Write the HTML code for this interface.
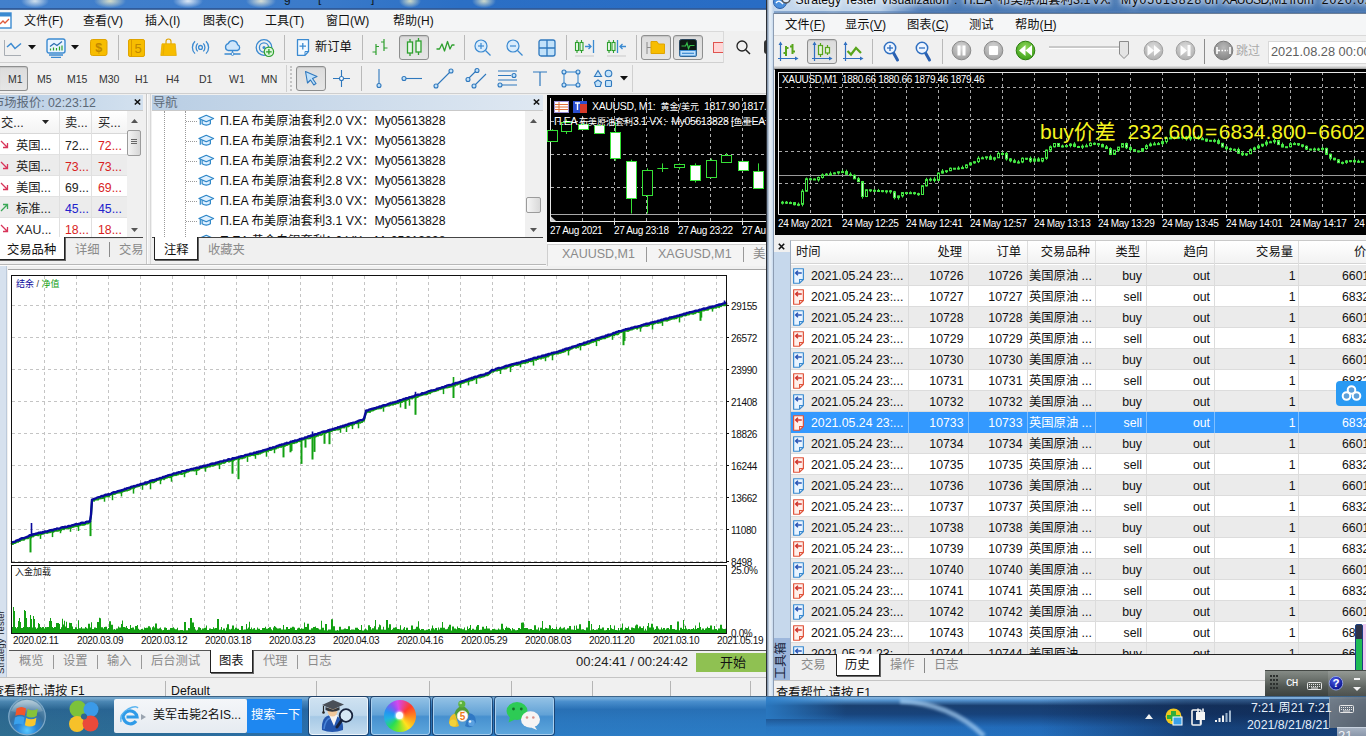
<!DOCTYPE html>
<html lang="zh-CN"><head><meta charset="utf-8"><title>MetaTrader 5</title>
<style>
html,body{margin:0;padding:0;}
body{width:1366px;height:736px;overflow:hidden;background:#f0f0f0;font-family:"Liberation Sans","Noto Sans CJK SC",sans-serif;font-size:12px;color:#1a1a1a;}
#root{position:relative;width:1366px;height:736px;overflow:hidden;background:#f0f0f0;}
.a{position:absolute;}
.t{position:absolute;white-space:nowrap;line-height:1;}
svg{position:absolute;overflow:visible;}
.sep{position:absolute;width:1px;background:#b9b9b9;}
.btnon{position:absolute;border:1px solid #8e8f8f;border-radius:3px;background:linear-gradient(#dcdcdc,#e6e6e6);box-shadow:inset 0 1px 1px #c5c5c5;box-sizing:border-box;}
.tf{position:absolute;white-space:nowrap;line-height:1;font-size:12px;color:#3a3a3a;}
.gtab{color:#8a8a8a;}
.row{position:absolute;left:790px;width:576px;height:21px;border-bottom:1px solid #dcdcdc;box-sizing:border-box;}
.row.g{background:#ebebeb;}
.row.sel{background:#3399ff;color:#fff;border-bottom-color:#3399ff;}
.row .t{top:5px;font-size:12.3px;}
.cd{position:absolute;top:0;width:1px;height:21px;background:#dcdcdc;}

</style></head>
<body>
<div id="root">
<div class="a" style="left:0;top:0;width:766px;height:9px;background:radial-gradient(ellipse 14px 7px at 35px 1px,rgba(225,235,240,.9),rgba(225,235,240,0)),radial-gradient(ellipse 16px 7px at 110px 1px,rgba(232,232,200,.9),rgba(232,232,200,0)),radial-gradient(ellipse 15px 7px at 188px 1px,rgba(240,245,250,.9),rgba(240,245,250,0)),radial-gradient(ellipse 15px 7px at 261px 1px,rgba(235,235,215,.9),rgba(235,235,215,0)),radial-gradient(ellipse 11px 7px at 410px 1px,rgba(225,230,200,.9),rgba(225,230,200,0)),radial-gradient(ellipse 12px 7px at 484px 1px,rgba(225,230,205,.9),rgba(225,230,205,0)),linear-gradient(90deg,#4280cc 0,#3b7bca 40%,#2b6fc5 60%,#286cc4 100%);"></div>
<div class="a" style="left:0;top:8px;width:766px;height:2px;background:linear-gradient(#1f4f98,#5f7fa8);"></div>
<div class="t" style="left:284px;top:-8px;font-size:12px;color:#101820;">g</div><div class="t" style="left:318px;top:-8px;font-size:12px;color:#101820;">[</div><div class="t" style="left:371px;top:-8px;font-size:12px;color:#101820;">]</div>
<div class="a" style="left:0;top:10px;width:766px;height:21px;background:#f4f5f6;"></div>
<div class="a" style="left:0;top:31px;width:723px;height:1px;background:#d9d9d9;"></div>
<div class="a" style="left:0;top:62px;width:723px;height:1px;background:#d0d0d0;"></div>
<div class="a" style="left:723px;top:31px;width:1px;height:32px;background:#d9d9d9;"></div>
<div class="a" style="left:0;top:93px;width:766px;height:1px;background:#cfcfcf;"></div>
<svg style="left:0;top:12px" width="13" height="18" viewBox="0 0 13 18"><rect x="-3" y="1" width="14" height="15" fill="#fff" stroke="#3b8ad1" stroke-width="1.4"/><rect x="-3" y="1" width="14" height="3.5" fill="#3b8ad1"/><path d="M0 12 L3 9 L5 11 L9 7" stroke="#e05a3a" stroke-width="1.3" fill="none"/></svg>
<div class="t" style="left:24px;top:15px;font-size:12px;color:#111;">文件(F)</div>
<div class="t" style="left:83px;top:15px;font-size:12px;color:#111;">查看(V)</div>
<div class="t" style="left:145px;top:15px;font-size:12px;color:#111;">插入(I)</div>
<div class="t" style="left:203px;top:15px;font-size:12px;color:#111;">图表(C)</div>
<div class="t" style="left:265px;top:15px;font-size:12px;color:#111;">工具(T)</div>
<div class="t" style="left:326px;top:15px;font-size:12px;color:#111;">窗口(W)</div>
<div class="t" style="left:393px;top:15px;font-size:12px;color:#111;">帮助(H)</div>
<svg style="left:1px;top:39px" width="21" height="18" viewBox="0 0 21 18"><path d="M3.5 1 V16.5 H20" stroke="#a8adb3" stroke-width="1" fill="none"/><path d="M6 8 L10 4.5 L14 9.500 L20 4.500" stroke="#3b8ad1" stroke-width="1.5" fill="none"/></svg>
<svg style="left:28px;top:45px" width="8" height="5" viewBox="0 0 8 5"><path d="M0 0 H8 L4 4.5 Z" fill="#111"/></svg>
<svg style="left:46px;top:38px" width="20" height="20" viewBox="0 0 20 20"><rect x="1" y="1" width="18" height="14" rx="2" fill="#eaf4ff" stroke="#3b8ad1" stroke-width="1.4"/><path d="M3 17 H17 M5 19.3 H15" stroke="#3b8ad1" stroke-width="1.3"/><path d="M4 8.5 L8 5.5 L11 7.5 L16 3.5" stroke="#2c6fb0" stroke-width="1.2" fill="none"/><path d="M4.5 12.5 V10.5 M7.5 12.5 V9.5 M10.5 12.5 V10 M13.5 12.5 V8.5 M16 12.5 V7.5" stroke="#2ea02e" stroke-width="1.2"/></svg>
<svg style="left:71px;top:45px" width="8" height="5" viewBox="0 0 8 5"><path d="M0 0 H8 L4 4.5 Z" fill="#111"/></svg>
<svg style="left:90px;top:38.5px" width="18" height="17" viewBox="0 0 18 17"><rect x="0.5" y="0.5" width="16.5" height="16" rx="2" fill="#f7bd00" stroke="#e0a400" stroke-width="1"/><text x="8.7" y="13" font-size="12.5" font-family="Liberation Sans,sans-serif" font-weight="bold" text-anchor="middle" fill="#c08800">$</text></svg>
<div class="sep" style="left:118px;top:35px;height:25px;"></div>
<svg style="left:128px;top:38.5px" width="18" height="18" viewBox="0 0 18 18"><rect x="0.5" y="0.5" width="16" height="17" rx="1.5" fill="#f7bd00" stroke="#e0a400" stroke-width="1"/><path d="M3.5 0.5 V17.5" stroke="#d99a00" stroke-width="1"/><text x="10" y="13.5" font-size="13" font-family="Liberation Sans,sans-serif" text-anchor="middle" fill="#c08800">5</text></svg>
<svg style="left:160px;top:38px" width="18" height="19" viewBox="0 0 18 19"><path d="M6 8 V3.500 Q6 1 8.500 1 Q11 1 11 3.500 V8" stroke="#e0a400" stroke-width="1.200" fill="none"/><path d="M2 5.800 H15.200 L16.300 17.500 H0.800 Z" fill="#f7bd00" stroke="#e6ac00" stroke-width="0.800"/><path d="M4 6.500 L3.200 17" stroke="#e8ae00" stroke-width="1.200"/></svg>
<svg style="left:191px;top:39px" width="19" height="17" viewBox="0 0 19 17"><circle cx="9.500" cy="8.400" r="1.900" fill="none" stroke="#3b8ad1" stroke-width="1.300"/><path d="M6.700 4.400 A5.800 5.800 0 0 0 6.700 12.400 M12.300 4.400 A5.800 5.800 0 0 1 12.300 12.400" stroke="#3b8ad1" stroke-width="1.300" fill="none"/><path d="M4 2.200 A8.700 8.700 0 0 0 4 14.600 M15 2.200 A8.700 8.700 0 0 1 15 14.600" stroke="#3b8ad1" stroke-width="1.300" fill="none"/></svg>
<svg style="left:223px;top:39px" width="19" height="19" viewBox="0 0 19 19"><path d="M5 11.500 A3.600 3.600 0 0 1 5.200 4.600 A5 5 0 0 1 14.600 5.600 A3.100 3.100 0 0 1 14.400 11.500 Z" fill="#cfe6fb" stroke="#3b8ad1" stroke-width="1.300"/><path d="M9.500 11.500 V14 M1.500 15 H17.500" stroke="#3b8ad1" stroke-width="1.300"/><circle cx="9.500" cy="15" r="1.400" fill="#fff" stroke="#3b8ad1" stroke-width="1"/></svg>
<svg style="left:255px;top:38px" width="20" height="20" viewBox="0 0 20 20"><circle cx="9" cy="9.500" r="7.800" fill="none" stroke="#3b8ad1" stroke-width="1.300"/><circle cx="9" cy="9.500" r="4.600" fill="none" stroke="#3b8ad1" stroke-width="1.300"/><circle cx="9" cy="9.500" r="1.500" fill="#3b8ad1"/><circle cx="13.900" cy="13.800" r="4.700" fill="#dcf6dc" stroke="#2ea02e" stroke-width="1.200"/><path d="M13.900 11 V16.600 M11.100 13.800 H16.700" stroke="#2ea02e" stroke-width="1.300"/></svg>
<div class="sep" style="left:284px;top:35px;height:25px;"></div>
<svg style="left:296px;top:39px" width="14" height="17" viewBox="0 0 14 17"><path d="M1.500 0.700 H12.500 V12.500 L9 16.300 H1.500 Z" fill="#f4faff" stroke="#3b8ad1" stroke-width="1.300" stroke-linejoin="round"/><path d="M9 16 V12.500 H12.500" fill="none" stroke="#3b8ad1" stroke-width="1"/><path d="M6.800 4 V10.500 M3.500 7.200 H10" stroke="#3b8ad1" stroke-width="1.300"/></svg>
<div class="t" style="left:315px;top:41px;font-size:12.3px;color:#111;">新订单</div>
<div class="sep" style="left:362px;top:35px;height:25px;"></div>
<svg style="left:371px;top:38px" width="18" height="18" viewBox="0 0 18 18"><path d="M5 6 V17 M1.5 14 H5 M5 8.5 H8" stroke="#2ea02e" stroke-width="1.200" fill="none"/><path d="M13 1 V13 M10 4 H13 M13 10 H16.5" stroke="#2ea02e" stroke-width="1.200" fill="none"/></svg>
<div class="btnon" style="left:399px;top:35px;width:30px;height:25px;"></div>
<svg style="left:406px;top:38px" width="17" height="19" viewBox="0 0 17 19"><path d="M4 1 V18 M12.5 0 V17" stroke="#2ea02e" stroke-width="1.3"/><rect x="1.5" y="4" width="5" height="11" fill="#e9f8e9" stroke="#2ea02e" stroke-width="1.3"/><rect x="10" y="3" width="5" height="11" fill="#e9f8e9" stroke="#2ea02e" stroke-width="1.3"/></svg>
<svg style="left:436px;top:40px" width="19" height="14" viewBox="0 0 19 14"><path d="M0.5 9 L3.5 9 L6 4 L8.5 11 L11.5 1.5 L14 9 L16 5 L18.5 5" stroke="#2ea02e" stroke-width="1.300" fill="none" stroke-linejoin="round"/></svg>
<div class="sep" style="left:464px;top:35px;height:25px;"></div>
<svg style="left:474px;top:39px" width="17" height="17" viewBox="0 0 17 17"><circle cx="7" cy="7" r="6" fill="#d9ecfc" stroke="#3b8ad1" stroke-width="1.200"/><path d="M11.5 11.5 L16.5 16.5" stroke="#3b8ad1" stroke-width="1.300"/><path d="M4 7 H10" stroke="#3b8ad1" stroke-width="1.200"/><path d="M7 4 V10" stroke="#3b8ad1" stroke-width="1.200"/></svg>
<svg style="left:506px;top:39px" width="17" height="17" viewBox="0 0 17 17"><circle cx="7" cy="7" r="6" fill="#d9ecfc" stroke="#3b8ad1" stroke-width="1.200"/><path d="M11.5 11.5 L16.5 16.5" stroke="#3b8ad1" stroke-width="1.300"/><path d="M4 7 H10" stroke="#3b8ad1" stroke-width="1.200"/></svg>
<svg style="left:538px;top:38.5px" width="18" height="18" viewBox="0 0 18 18"><rect x="1" y="1" width="16" height="16" rx="2" fill="#c2e2fa" stroke="#2f78bd" stroke-width="1.300"/><path d="M9 1 V17 M1 9 H17" stroke="#2f78bd" stroke-width="1.300"/></svg>
<div class="sep" style="left:566px;top:35px;height:25px;"></div>
<svg style="left:574px;top:38px" width="21" height="19" viewBox="0 0 21 19"><path d="M3 2 V15 M7.5 2 V15" stroke="#2ea02e" stroke-width="1.1"/><rect x="1.5" y="4.5" width="3" height="8" fill="#e9f8e9" stroke="#2ea02e" stroke-width="1.1"/><rect x="6" y="4.500" width="3" height="8" fill="#e9f8e9" stroke="#2ea02e" stroke-width="1.1"/><path d="M11 8.5 H17 M14.5 6 L17 8.500 L14.500 11" stroke="#3b8ad1" stroke-width="1.3" fill="none"/><path d="M19.500 2 V15" stroke="#3b8ad1" stroke-width="1.3"/><path d="M1 18 H20" stroke="#c9c9c9" stroke-width="1"/></svg>
<svg style="left:606px;top:38px" width="21" height="19" viewBox="0 0 21 19"><path d="M3 2 V15 M7.5 2 V15" stroke="#2ea02e" stroke-width="1.1"/><rect x="1.5" y="4.5" width="3" height="8" fill="#e9f8e9" stroke="#2ea02e" stroke-width="1.1"/><rect x="6" y="4.5" width="3" height="8" fill="#e9f8e9" stroke="#2ea02e" stroke-width="1.1"/><path d="M11.5 2 V15" stroke="#3b8ad1" stroke-width="1.3"/><path d="M14 8.5 H20 M16.5 6 L14 8.5 L16.5 11" stroke="#3b8ad1" stroke-width="1.3" fill="none"/><path d="M1 18 H20" stroke="#c9c9c9" stroke-width="1"/></svg>
<div class="sep" style="left:636px;top:35px;height:25px;"></div>
<div class="btnon" style="left:641px;top:35px;width:30px;height:25px;"></div>
<svg style="left:646px;top:40px" width="20" height="15" viewBox="0 0 20 15"><path d="M1 2 V14" stroke="#8a8a8a" stroke-width="1"/><path d="M1 7.5 H5" stroke="#8a8a8a" stroke-width="1"/><path d="M5 1.5 H11 L12.5 4 H18.5 V13.5 H5 Z" fill="#f7bd00" stroke="#e0a400" stroke-width="1"/></svg>
<div class="btnon" style="left:673px;top:35px;width:30px;height:25px;"></div>
<svg style="left:679px;top:39px" width="18" height="18" viewBox="0 0 18 18"><rect x="0.5" y="0.5" width="17" height="17" rx="2" fill="#0d1a14" stroke="#25425a" stroke-width="1"/><rect x="1" y="11.5" width="16" height="5.5" fill="#bfe0fb" stroke="#3b8ad1" stroke-width="1"/><path d="M3 14.3 H15" stroke="#3b8ad1" stroke-width="1.2"/><path d="M2.500 7 H6.500 L8 4 L9.500 9.500 L11 6.500 H15.500" stroke="#36c04a" stroke-width="1.2" fill="none"/></svg>
<div class="a" style="left:713px;top:42px;width:10px;height:11px;background:#ffd6d6;border:1.5px solid #e0534f;border-right:none;box-sizing:border-box;"></div>
<svg style="left:736px;top:40px" width="15" height="15" viewBox="0 0 15 15"><circle cx="6" cy="6" r="5" fill="none" stroke="#222" stroke-width="1.3"/><path d="M9.700 9.700 L14 14" stroke="#222" stroke-width="1.500"/></svg>
<div class="a" style="left:764px;top:40px;width:3px;height:14px;background:#333;border-radius:3px 0 0 3px;"></div>
<div class="btnon" style="left:0px;top:66px;width:28px;height:25px;border-left:none;border-radius:0 3px 3px 0;"></div>
<div class="t" style="left:8px;top:73.5px;font-size:10.5px;color:#333;">M1</div>
<div class="t" style="left:37px;top:73.5px;font-size:10.5px;color:#333;">M5</div>
<div class="t" style="left:67px;top:73.5px;font-size:10.5px;color:#333;">M15</div>
<div class="t" style="left:99px;top:73.5px;font-size:10.5px;color:#333;">M30</div>
<div class="t" style="left:135px;top:73.5px;font-size:10.5px;color:#333;">H1</div>
<div class="t" style="left:166px;top:73.5px;font-size:10.5px;color:#333;">H4</div>
<div class="t" style="left:199px;top:73.5px;font-size:10.5px;color:#333;">D1</div>
<div class="t" style="left:229px;top:73.5px;font-size:10.5px;color:#333;">W1</div>
<div class="t" style="left:261px;top:73.5px;font-size:10.5px;color:#333;">MN</div>
<div class="sep" style="left:286px;top:65px;height:27px;background:#cfcfcf;"></div>
<div class="a" style="left:290px;top:66px;width:1px;height:25px;border-left:2px dotted #c4c4c4;"></div>
<div class="btnon" style="left:296px;top:66px;width:30px;height:25px;"></div>
<svg style="left:304px;top:70px" width="15" height="17" viewBox="0 0 15 17"><path d="M1.500 1.500 L13 6.500 L8.500 8.500 L12 13.500 L9.800 15 L6.500 10 L3.500 13 Z" fill="#bfe0fa" stroke="#2f78bd" stroke-width="1.100" stroke-linejoin="round"/></svg>
<svg style="left:333px;top:70px" width="17" height="17" viewBox="0 0 17 17"><path d="M8.500 0 V17 M0 8.500 H17" stroke="#2f78bd" stroke-width="1.100"/><circle cx="8.500" cy="8.500" r="2" fill="#fff" stroke="#2f78bd" stroke-width="1.100"/></svg>
<div class="sep" style="left:361px;top:66px;height:25px;"></div>
<svg style="left:375px;top:69px" width="8" height="20" viewBox="0 0 8 20"><path d="M4 0 V15" stroke="#2f78bd" stroke-width="1.100"/><circle cx="4" cy="16.500" r="2" fill="#c2e2fa" stroke="#2f78bd" stroke-width="1.100"/></svg>
<svg style="left:401px;top:75px" width="21" height="7" viewBox="0 0 21 7"><path d="M5 3.500 H21" stroke="#2f78bd" stroke-width="1.100"/><circle cx="3" cy="3.500" r="2" fill="#c2e2fa" stroke="#2f78bd" stroke-width="1.100"/></svg>
<svg style="left:433px;top:68px" width="21" height="21" viewBox="0 0 21 21"><path d="M4 17 L17 4" stroke="#2f78bd" stroke-width="1.100"/><circle cx="3" cy="18" r="2" fill="#c2e2fa" stroke="#2f78bd" stroke-width="1.100"/><circle cx="18" cy="3" r="2" fill="#c2e2fa" stroke="#2f78bd" stroke-width="1.100"/></svg>
<svg style="left:465px;top:68px" width="22" height="21" viewBox="0 0 22 21"><path d="M4 10 L11 3 M10 17 L21 6" stroke="#2f78bd" stroke-width="1.100"/><circle cx="3" cy="11.500" r="2" fill="#c2e2fa" stroke="#2f78bd" stroke-width="1.100"/><circle cx="12" cy="2.500" r="2" fill="#c2e2fa" stroke="#2f78bd" stroke-width="1.100"/><circle cx="9" cy="18" r="2" fill="#c2e2fa" stroke="#2f78bd" stroke-width="1.100"/></svg>
<svg style="left:497px;top:69px" width="22" height="19" viewBox="0 0 22 19"><path d="M1 2 H20 M1 6.500 H14 M1 11 H20 M5 16 H20" stroke="#2f78bd" stroke-width="1.100"/><circle cx="17" cy="6.500" r="2" fill="#c2e2fa" stroke="#2f78bd" stroke-width="1.100"/><circle cx="3" cy="16" r="2" fill="#c2e2fa" stroke="#2f78bd" stroke-width="1.100"/></svg>
<svg style="left:533px;top:71px" width="14" height="15" viewBox="0 0 14 15"><path d="M0 1 H14 M7 1 V15" stroke="#2f78bd" stroke-width="1.200"/></svg>
<svg style="left:561px;top:69px" width="20" height="19" viewBox="0 0 20 19"><rect x="3" y="3" width="14" height="13" fill="none" stroke="#3b8ad1" stroke-width="1.100"/><circle cx="3" cy="3" r="2" fill="#c2e2fa" stroke="#2f78bd" stroke-width="1.100"/><circle cx="17" cy="3" r="2" fill="#c2e2fa" stroke="#2f78bd" stroke-width="1.100"/><circle cx="3" cy="16" r="2" fill="#c2e2fa" stroke="#2f78bd" stroke-width="1.100"/><circle cx="17" cy="16" r="2" fill="#c2e2fa" stroke="#2f78bd" stroke-width="1.100"/></svg>
<svg style="left:594px;top:69px" width="19" height="19" viewBox="0 0 19 19"><path d="M4 1.500 L7.500 7.500 H0.500 Z" fill="#c2e2fa" stroke="#2f78bd" stroke-width="1.100"/><circle cx="14.500" cy="4.500" r="3.300" fill="#c2e2fa" stroke="#2f78bd" stroke-width="1.100"/><path d="M4 11 L7.500 13.500 L6.200 17.500 H1.800 L0.500 13.500 Z" fill="#c2e2fa" stroke="#2f78bd" stroke-width="1.100"/><rect x="11.500" y="11.500" width="6" height="6" rx="1" fill="#c2e2fa" stroke="#2f78bd" stroke-width="1.100"/></svg>
<svg style="left:620px;top:76px" width="8" height="5" viewBox="0 0 8 5"><path d="M0 0 H8 L4 4.5 Z" fill="#111"/></svg>
<div class="sep" style="left:632px;top:65px;height:27px;background:#d0d0d0;"></div>
<div class="a" style="left:0;top:95px;width:143px;height:15px;background:linear-gradient(90deg,#b9cee4,#d3e1ef);"></div>
<div class="a" style="left:0;top:110px;width:143px;height:1px;background:#c9c9c9;"></div>
<div class="t" style="left:-8px;top:97px;font-size:12.3px;color:#5b6877;">市场报价: 02:23:12</div>
<svg style="left:134px;top:99px" width="7" height="6" viewBox="0 0 7 6"><path d="M0.800 0.500 L6.200 5.500 M6.200 0.500 L0.800 5.500" stroke="#111" stroke-width="1.600"/></svg>
<div class="a" style="left:0;top:111px;width:143px;height:127px;background:#fff;"></div>
<div class="a" style="left:0;top:111px;width:127px;height:22px;background:linear-gradient(#ffffff,#f3f3f3);border-bottom:1px solid #d8d8d8;"></div>
<div class="a" style="left:0;top:154px;width:127px;height:1px;background:#e2e2e2;"></div>
<svg style="left:0;top:140px" width="9" height="9" viewBox="0 0 9 9"><path d="M1 1 L7.500 7.500 M3 7.500 H7.500 V3" stroke="#d8355a" stroke-width="1.300" fill="none"/></svg>
<div class="t" style="left:16px;top:140px;font-size:12.3px;color:#222;">英国...</div>
<div class="t" style="left:65px;top:140px;font-size:12.3px;color:#222;">72...</div>
<div class="t" style="left:98px;top:140px;font-size:12.3px;color:#d81e1e;">72...</div>
<div class="a" style="left:0;top:155px;width:127px;height:21px;background:#ececec;"></div>
<div class="a" style="left:0;top:175px;width:127px;height:1px;background:#e2e2e2;"></div>
<svg style="left:0;top:161px" width="9" height="9" viewBox="0 0 9 9"><path d="M1 1 L7.500 7.500 M3 7.500 H7.500 V3" stroke="#d8355a" stroke-width="1.300" fill="none"/></svg>
<div class="t" style="left:16px;top:161px;font-size:12.3px;color:#222;">英国...</div>
<div class="t" style="left:65px;top:161px;font-size:12.3px;color:#d81e1e;">73...</div>
<div class="t" style="left:98px;top:161px;font-size:12.3px;color:#d81e1e;">73...</div>
<div class="a" style="left:0;top:196px;width:127px;height:1px;background:#e2e2e2;"></div>
<svg style="left:0;top:182px" width="9" height="9" viewBox="0 0 9 9"><path d="M1 1 L7.500 7.500 M3 7.500 H7.500 V3" stroke="#d8355a" stroke-width="1.300" fill="none"/></svg>
<div class="t" style="left:16px;top:182px;font-size:12.3px;color:#222;">美国...</div>
<div class="t" style="left:65px;top:182px;font-size:12.3px;color:#222;">69...</div>
<div class="t" style="left:98px;top:182px;font-size:12.3px;color:#d81e1e;">69...</div>
<div class="a" style="left:0;top:197px;width:127px;height:21px;background:#ececec;"></div>
<div class="a" style="left:0;top:217px;width:127px;height:1px;background:#e2e2e2;"></div>
<svg style="left:0;top:203px" width="9" height="9" viewBox="0 0 9 9"><path d="M1 8 L7.500 1.500 M3 1.500 H7.500 V6" stroke="#3aa856" stroke-width="1.300" fill="none"/></svg>
<div class="t" style="left:16px;top:203px;font-size:12.3px;color:#222;">标准...</div>
<div class="t" style="left:65px;top:203px;font-size:12.3px;color:#2222cc;">45...</div>
<div class="t" style="left:98px;top:203px;font-size:12.3px;color:#2222cc;">45...</div>
<div class="a" style="left:0;top:238px;width:127px;height:1px;background:#e2e2e2;"></div>
<svg style="left:0;top:224px" width="9" height="9" viewBox="0 0 9 9"><path d="M1 1 L7.500 7.500 M3 7.500 H7.500 V3" stroke="#d8355a" stroke-width="1.300" fill="none"/></svg>
<div class="t" style="left:16px;top:224px;font-size:12.3px;color:#222;">XAU...</div>
<div class="t" style="left:65px;top:224px;font-size:12.3px;color:#d81e1e;">18...</div>
<div class="t" style="left:98px;top:224px;font-size:12.3px;color:#d81e1e;">18...</div>
<div class="t" style="left:1px;top:117px;font-size:12.3px;color:#222;">交...</div>
<svg style="left:42px;top:120px" width="7" height="4" viewBox="0 0 7 4"><path d="M0 0 H7 L3.500 4 Z" fill="#222"/></svg>
<div class="t" style="left:65px;top:117px;font-size:12.3px;color:#222;">卖...</div>
<div class="t" style="left:98px;top:117px;font-size:12.3px;color:#222;">买...</div>
<div class="a" style="left:59px;top:111px;width:1px;height:127px;background:#e0e0e0;"></div>
<div class="a" style="left:91px;top:111px;width:1px;height:127px;background:#e0e0e0;"></div>
<div class="a" style="left:127px;top:111px;width:16px;height:127px;background:#f0f0f0;"></div>
<svg style="left:131px;top:119px" width="7" height="4" viewBox="0 0 7 4"><path d="M0 4 L3.500 0 L7 4 Z" fill="#555"/></svg>
<svg style="left:131px;top:228px" width="7" height="4" viewBox="0 0 7 4"><path d="M0 0 L3.500 4 L7 0 Z" fill="#555"/></svg>
<div class="a" style="left:127px;top:130px;width:14px;height:26px;border:1px solid #9b9b9b;border-radius:2px;background:linear-gradient(90deg,#f4f4f4,#d6d6d6);box-sizing:border-box;"></div>
<div class="a" style="left:131px;top:139px;width:6px;height:1px;background:#666;box-shadow:0 2px 0 #666,0 4px 0 #666;"></div>
<div class="a" style="left:0;top:237px;width:143px;height:1px;background:#444;"></div>
<div class="a" style="left:-2px;top:237px;width:67px;height:23px;background:#fff;border:1px solid #222;border-top:none;box-sizing:border-box;box-shadow:1px 1px 0 #666;"></div>
<div class="t" style="left:7px;top:244px;font-size:12.3px;color:#111;">交易品种</div>
<div class="t gtab" style="left:75px;top:244px;font-size:12.3px;">详细</div>
<div class="a" style="left:109px;top:242px;width:1px;height:15px;background:#8a8a8a;"></div>
<div class="t gtab" style="left:119px;top:244px;font-size:12.3px;">交易</div>
<div class="a" style="left:143px;top:94px;width:9px;height:172px;background:#f0f0f0;"></div>
<div class="a" style="left:146px;top:94px;width:1px;height:170px;background:#c8c8c8;"></div>
<div class="a" style="left:147px;top:94px;width:1px;height:170px;background:#fbfbfb;"></div>
<div class="a" style="left:150px;top:94px;width:1px;height:170px;background:#d8d8d8;"></div>
<div class="a" style="left:0;top:264px;width:546px;height:1px;background:#b8b8b8;"></div>
<div class="a" style="left:0;top:265px;width:546px;height:1px;background:#fcfcfc;"></div>
<div class="a" style="left:152px;top:95px;width:391px;height:15px;background:linear-gradient(90deg,#b9cee4,#dfe8f2);"></div>
<div class="a" style="left:152px;top:110px;width:391px;height:1px;background:#c9c9c9;"></div>
<div class="t" style="left:153px;top:97px;font-size:12.3px;color:#5b6877;">导航</div>
<svg style="left:533px;top:99px" width="7" height="6" viewBox="0 0 7 6"><path d="M0.800 0.500 L6.200 5.500 M6.200 0.500 L0.800 5.500" stroke="#111" stroke-width="1.600"/></svg>
<div class="a" style="left:152px;top:111px;width:391px;height:126px;background:#fff;overflow:hidden;" id="nav">
<div class="a" style="left:12px;top:0;width:0;height:126px;border-left:1px dotted #9a9a9a;"></div>
<div class="a" style="left:33px;top:0;width:0;height:126px;border-left:1px dotted #9a9a9a;"></div>
<div class="a" style="left:34px;top:10px;width:11px;height:0;border-top:1px dotted #9a9a9a;"></div>
<svg style="left:46px;top:3px" width="16.500" height="14" viewBox="0 0 18 15"><path d="M4.500 6.500 V10.500 Q9 13.500 13.500 10.500 V6.500" fill="#dff0ff" stroke="#2d86c8" stroke-width="1.300"/><path d="M1 4.800 L9 1.200 L17 4.800 L9 8.300 Z" fill="#dff0ff" stroke="#2d86c8" stroke-width="1.300" stroke-linejoin="round"/><path d="M2.500 5.800 V11.500" stroke="#2d86c8" stroke-width="1.300"/></svg>
<div class="t" style="left:68px;top:4px;font-size:12.3px;color:#111;">П.EA 布美原油套利2.0 VX：My05613828</div>
<div class="a" style="left:34px;top:30px;width:11px;height:0;border-top:1px dotted #9a9a9a;"></div>
<svg style="left:46px;top:23px" width="16.500" height="14" viewBox="0 0 18 15"><path d="M4.500 6.500 V10.500 Q9 13.500 13.500 10.500 V6.500" fill="#dff0ff" stroke="#2d86c8" stroke-width="1.300"/><path d="M1 4.800 L9 1.200 L17 4.800 L9 8.300 Z" fill="#dff0ff" stroke="#2d86c8" stroke-width="1.300" stroke-linejoin="round"/><path d="M2.500 5.800 V11.500" stroke="#2d86c8" stroke-width="1.300"/></svg>
<div class="t" style="left:68px;top:24px;font-size:12.3px;color:#111;">П.EA 布美原油套利2.1 VX：My05613828</div>
<div class="a" style="left:34px;top:50px;width:11px;height:0;border-top:1px dotted #9a9a9a;"></div>
<svg style="left:46px;top:43px" width="16.500" height="14" viewBox="0 0 18 15"><path d="M4.500 6.500 V10.500 Q9 13.500 13.500 10.500 V6.500" fill="#dff0ff" stroke="#2d86c8" stroke-width="1.300"/><path d="M1 4.800 L9 1.200 L17 4.800 L9 8.300 Z" fill="#dff0ff" stroke="#2d86c8" stroke-width="1.300" stroke-linejoin="round"/><path d="M2.500 5.800 V11.500" stroke="#2d86c8" stroke-width="1.300"/></svg>
<div class="t" style="left:68px;top:44px;font-size:12.3px;color:#111;">П.EA 布美原油套利2.2 VX：My05613828</div>
<div class="a" style="left:34px;top:70px;width:11px;height:0;border-top:1px dotted #9a9a9a;"></div>
<svg style="left:46px;top:63px" width="16.500" height="14" viewBox="0 0 18 15"><path d="M4.500 6.500 V10.500 Q9 13.500 13.500 10.500 V6.500" fill="#dff0ff" stroke="#2d86c8" stroke-width="1.300"/><path d="M1 4.800 L9 1.200 L17 4.800 L9 8.300 Z" fill="#dff0ff" stroke="#2d86c8" stroke-width="1.300" stroke-linejoin="round"/><path d="M2.500 5.800 V11.500" stroke="#2d86c8" stroke-width="1.300"/></svg>
<div class="t" style="left:68px;top:64px;font-size:12.3px;color:#111;">П.EA 布美原油套利2.8 VX：My05613828</div>
<div class="a" style="left:34px;top:90px;width:11px;height:0;border-top:1px dotted #9a9a9a;"></div>
<svg style="left:46px;top:83px" width="16.500" height="14" viewBox="0 0 18 15"><path d="M4.500 6.500 V10.500 Q9 13.500 13.500 10.500 V6.500" fill="#dff0ff" stroke="#2d86c8" stroke-width="1.300"/><path d="M1 4.800 L9 1.200 L17 4.800 L9 8.300 Z" fill="#dff0ff" stroke="#2d86c8" stroke-width="1.300" stroke-linejoin="round"/><path d="M2.500 5.800 V11.500" stroke="#2d86c8" stroke-width="1.300"/></svg>
<div class="t" style="left:68px;top:84px;font-size:12.3px;color:#111;">П.EA 布美原油套利3.0 VX：My05613828</div>
<div class="a" style="left:34px;top:110px;width:11px;height:0;border-top:1px dotted #9a9a9a;"></div>
<svg style="left:46px;top:103px" width="16.500" height="14" viewBox="0 0 18 15"><path d="M4.500 6.500 V10.500 Q9 13.500 13.500 10.500 V6.500" fill="#dff0ff" stroke="#2d86c8" stroke-width="1.300"/><path d="M1 4.800 L9 1.200 L17 4.800 L9 8.300 Z" fill="#dff0ff" stroke="#2d86c8" stroke-width="1.300" stroke-linejoin="round"/><path d="M2.500 5.800 V11.500" stroke="#2d86c8" stroke-width="1.300"/></svg>
<div class="t" style="left:68px;top:104px;font-size:12.3px;color:#111;">П.EA 布美原油套利3.1 VX：My05613828</div>
<div class="a" style="left:34px;top:130px;width:11px;height:0;border-top:1px dotted #9a9a9a;"></div>
<svg style="left:46px;top:123px" width="16.500" height="14" viewBox="0 0 18 15"><path d="M4.500 6.500 V10.500 Q9 13.500 13.500 10.500 V6.500" fill="#dff0ff" stroke="#2d86c8" stroke-width="1.300"/><path d="M1 4.800 L9 1.200 L17 4.800 L9 8.300 Z" fill="#dff0ff" stroke="#2d86c8" stroke-width="1.300" stroke-linejoin="round"/><path d="M2.500 5.800 V11.500" stroke="#2d86c8" stroke-width="1.300"/></svg>
<div class="t" style="left:68px;top:124px;font-size:12.3px;color:#111;">П.EA 黄金白银套利1.0 VX：My05613828</div>
<div class="a" style="left:373px;top:0;width:18px;height:126px;background:#f0f0f0;"></div>
<svg style="left:378px;top:8px" width="7" height="4" viewBox="0 0 7 4"><path d="M0 4 L3.500 0 L7 4 Z" fill="#555"/></svg>
<svg style="left:378px;top:117px" width="7" height="4" viewBox="0 0 7 4"><path d="M0 0 L3.500 4 L7 0 Z" fill="#555"/></svg>
<div class="a" style="left:374px;top:86px;width:15px;height:16px;border:1px solid #9b9b9b;border-radius:2px;background:linear-gradient(90deg,#f6f6f6,#d9d9d9);box-sizing:border-box;"></div>
</div>
<div class="a" style="left:152px;top:237px;width:391px;height:1px;background:#444;"></div>
<div class="a" style="left:154px;top:237px;width:44px;height:23px;background:#fff;border:1px solid #222;border-top:none;box-sizing:border-box;box-shadow:1px 1px 0 #666;"></div>
<div class="t" style="left:164px;top:244px;font-size:12.3px;color:#111;">注释</div>
<div class="t gtab" style="left:208px;top:244px;font-size:12.3px;">收藏夹</div>
<div class="a" style="left:547px;top:95px;width:219px;height:147px;background:#000;overflow:hidden;" id="mini">
<svg style="left:0;top:0" width="219" height="147" viewBox="0 0 219 147"><path d="M3.500 3 V126.500 H219" stroke="#e8e8e8" stroke-width="1" fill="none"/><path d="M4 119.500 H219" stroke="#a8a8a8" stroke-width="1"/><path d="M35.5 3 V126" stroke="#b0b0b0" stroke-width="1" stroke-dasharray="3 3"/><path d="M67.5 3 V126" stroke="#b0b0b0" stroke-width="1" stroke-dasharray="3 3"/><path d="M99.5 3 V126" stroke="#b0b0b0" stroke-width="1" stroke-dasharray="3 3"/><path d="M131.5 3 V126" stroke="#b0b0b0" stroke-width="1" stroke-dasharray="3 3"/><path d="M163.5 3 V126" stroke="#b0b0b0" stroke-width="1" stroke-dasharray="3 3"/><path d="M195.5 3 V126" stroke="#b0b0b0" stroke-width="1" stroke-dasharray="3 3"/><path d="M4 26.5 H219" stroke="#b0b0b0" stroke-width="1" stroke-dasharray="3 3"/><path d="M4 59.5 H219" stroke="#b0b0b0" stroke-width="1" stroke-dasharray="3 3"/><path d="M4 92.5 H219" stroke="#b0b0b0" stroke-width="1" stroke-dasharray="3 3"/><path d="M67.5 126 V130" stroke="#e8e8e8" stroke-width="1"/><path d="M131.5 126 V130" stroke="#e8e8e8" stroke-width="1"/><path d="M195.5 126 V130" stroke="#e8e8e8" stroke-width="1"/><path d="M5.5 34.1 V46.9" stroke="#35e035" stroke-width="1"/><rect x="0.5" y="35.5" width="10" height="11.0" fill="#000" stroke="#35e035" stroke-width="1"/><path d="M19.5 24.4 V39.0" stroke="#35e035" stroke-width="1"/><rect x="14.5" y="27.5" width="10" height="9.0" fill="#000" stroke="#35e035" stroke-width="1"/><path d="M36.5 28.0 V34.6" stroke="#35e035" stroke-width="1"/><rect x="31.5" y="29.5" width="10" height="5.0" fill="#fff" stroke="#35e035" stroke-width="1"/><path d="M52.5 29.3 V39.0" stroke="#35e035" stroke-width="1"/><rect x="47.5" y="30.5" width="10" height="8.0" fill="#fff" stroke="#35e035" stroke-width="1"/><path d="M68.5 26.8 V65.9" stroke="#35e035" stroke-width="1"/><rect x="63.5" y="37.5" width="10" height="26.0" fill="#fff" stroke="#35e035" stroke-width="1"/><path d="M84.5 64.7 V118.5" stroke="#35e035" stroke-width="1"/><rect x="79.5" y="66.5" width="10" height="37.0" fill="#fff" stroke="#35e035" stroke-width="1"/><path d="M100.5 73.3 V118.5" stroke="#35e035" stroke-width="1"/><rect x="95.5" y="75.5" width="10" height="25.0" fill="#000" stroke="#35e035" stroke-width="1"/><path d="M132.5 68.4 V74.5" stroke="#35e035" stroke-width="1"/><rect x="127.5" y="69.5" width="10" height="3.0" fill="#000" stroke="#35e035" stroke-width="1"/><path d="M148.5 68.4 V87.5" stroke="#35e035" stroke-width="1"/><rect x="143.5" y="70.5" width="10" height="15.0" fill="#fff" stroke="#35e035" stroke-width="1"/><path d="M164.5 63.5 V83.1" stroke="#35e035" stroke-width="1"/><rect x="159.5" y="65.5" width="10" height="17.0" fill="#000" stroke="#35e035" stroke-width="1"/><path d="M179.5 58.1 V66.4" stroke="#35e035" stroke-width="1"/><rect x="174.5" y="60.5" width="10" height="7.0" fill="#000" stroke="#35e035" stroke-width="1"/><path d="M196.5 65.9 V75.7" stroke="#35e035" stroke-width="1"/><rect x="191.5" y="66.5" width="10" height="9.0" fill="#fff" stroke="#35e035" stroke-width="1"/><path d="M211.5 68.4 V93.8" stroke="#35e035" stroke-width="1"/><rect x="206.5" y="76.5" width="10" height="17.0" fill="#fff" stroke="#35e035" stroke-width="1"/><path d="M115.5 68.4 V77.0 M110.3 73.5 H121.3" stroke="#35e035" stroke-width="1"/><path d="M4 121.500 L9 126 H4 Z" fill="#ccc"/></svg>
<svg style="left:7px;top:6px" width="15" height="12" viewBox="0 0 15 12"><rect x="0.500" y="0.500" width="14" height="11" fill="#fff" stroke="#9a8fd8" stroke-width="1"/><path d="M1 3.500 H14 M1 6 H14 M1 8.500 H14 M5 1 V11" stroke="#e0703a" stroke-width="1"/></svg>
<svg style="left:26px;top:6px" width="14" height="12" viewBox="0 0 14 12"><rect x="0" y="0" width="14" height="12" fill="#2b4fd0"/><rect x="7" y="3" width="7" height="9" fill="#d83a2a"/><path d="M2 2 H7 M4.500 2 V9" stroke="#fff" stroke-width="1.400"/></svg>
<div class="t" style="left:45px;top:6px;font-size:10.5px;letter-spacing:-0.35px;color:#fff;">XAUUSD, M1:&nbsp; <span style="font-size:9px;letter-spacing:0">黄金/美元</span>&nbsp; 1817.90 1817.90</div>
<div class="t" style="left:7px;top:21px;font-size:10.5px;letter-spacing:-0.35px;color:#fff;">П.EA <span style="font-size:9px;letter-spacing:0">布美原油套利</span>3.1 VX<span style="font-size:9px">：</span>My05613828 [<span style="font-size:9px;letter-spacing:0">鱼重</span>EA<span style="font-size:9px;letter-spacing:0">论坛</span>]</div>
<div class="t" style="left:3px;top:131px;font-size:10px;letter-spacing:-0.35px;color:#fff;">27 Aug 2021</div>
<div class="t" style="left:67px;top:131px;font-size:10px;letter-spacing:-0.35px;color:#fff;">27 Aug 23:18</div>
<div class="t" style="left:131px;top:131px;font-size:10px;letter-spacing:-0.35px;color:#fff;">27 Aug 23:22</div>
<div class="t" style="left:195px;top:131px;font-size:10px;letter-spacing:-0.35px;color:#fff;">27 Aug 23:26</div>
</div>
<div class="a" style="left:547px;top:242px;width:219px;height:2px;background:#fff;"></div>
<div class="a" style="left:547px;top:244px;width:219px;height:22px;background:#f4f4f4;border-top:1px solid #cfcfcf;border-left:1px solid #cfcfcf;box-sizing:border-box;"></div>
<div class="t" style="left:562px;top:248px;font-size:12.5px;color:#8a8a8a;">XAUUSD,M1</div>
<div class="a" style="left:646px;top:247px;width:1px;height:15px;background:#999;"></div>
<div class="t" style="left:658px;top:248px;font-size:12.5px;color:#8a8a8a;">XAGUSD,M1</div>
<div class="a" style="left:743px;top:247px;width:1px;height:15px;background:#999;"></div>
<div class="t" style="left:753px;top:248px;font-size:12.5px;color:#8a8a8a;">美</div>
<div class="a" style="left:8px;top:270px;width:758px;height:380px;background:#fff;"></div>
<div class="a" style="left:0;top:266px;width:7px;height:412px;background:#d6e1ee;border-right:1px solid #bccadb;box-sizing:border-box;"></div>
<div class="a" style="left:8px;top:269px;width:758px;height:1px;background:#a6a6a6;"></div>
<div class="a" style="left:0;top:600px;width:6px;height:78px;overflow:hidden;"><div class="t" style="left:-4px;top:74px;font-size:9.500px;color:#20242c;transform-origin:0 0;transform:rotate(-90deg);">Strategy Tester</div></div>
<svg style="left:0;top:0" width="766" height="650" viewBox="0 0 766 650"><path d="M44.5 276 V633" stroke="#c4c4c4" stroke-width="1" stroke-dasharray="3 3"/><path d="M76.5 276 V633" stroke="#c4c4c4" stroke-width="1" stroke-dasharray="3 3"/><path d="M108.5 276 V633" stroke="#c4c4c4" stroke-width="1" stroke-dasharray="3 3"/><path d="M140.5 276 V633" stroke="#c4c4c4" stroke-width="1" stroke-dasharray="3 3"/><path d="M172.5 276 V633" stroke="#c4c4c4" stroke-width="1" stroke-dasharray="3 3"/><path d="M204.5 276 V633" stroke="#c4c4c4" stroke-width="1" stroke-dasharray="3 3"/><path d="M236.5 276 V633" stroke="#c4c4c4" stroke-width="1" stroke-dasharray="3 3"/><path d="M268.5 276 V633" stroke="#c4c4c4" stroke-width="1" stroke-dasharray="3 3"/><path d="M300.5 276 V633" stroke="#c4c4c4" stroke-width="1" stroke-dasharray="3 3"/><path d="M332.5 276 V633" stroke="#c4c4c4" stroke-width="1" stroke-dasharray="3 3"/><path d="M364.5 276 V633" stroke="#c4c4c4" stroke-width="1" stroke-dasharray="3 3"/><path d="M396.5 276 V633" stroke="#c4c4c4" stroke-width="1" stroke-dasharray="3 3"/><path d="M428.5 276 V633" stroke="#c4c4c4" stroke-width="1" stroke-dasharray="3 3"/><path d="M460.5 276 V633" stroke="#c4c4c4" stroke-width="1" stroke-dasharray="3 3"/><path d="M492.5 276 V633" stroke="#c4c4c4" stroke-width="1" stroke-dasharray="3 3"/><path d="M524.5 276 V633" stroke="#c4c4c4" stroke-width="1" stroke-dasharray="3 3"/><path d="M556.5 276 V633" stroke="#c4c4c4" stroke-width="1" stroke-dasharray="3 3"/><path d="M588.5 276 V633" stroke="#c4c4c4" stroke-width="1" stroke-dasharray="3 3"/><path d="M620.5 276 V633" stroke="#c4c4c4" stroke-width="1" stroke-dasharray="3 3"/><path d="M652.5 276 V633" stroke="#c4c4c4" stroke-width="1" stroke-dasharray="3 3"/><path d="M684.5 276 V633" stroke="#c4c4c4" stroke-width="1" stroke-dasharray="3 3"/><path d="M716.5 276 V633" stroke="#c4c4c4" stroke-width="1" stroke-dasharray="3 3"/><path d="M12 305.5 H727" stroke="#c4c4c4" stroke-width="1" stroke-dasharray="3 3"/><path d="M12 337.5 H727" stroke="#c4c4c4" stroke-width="1" stroke-dasharray="3 3"/><path d="M12 369.5 H727" stroke="#c4c4c4" stroke-width="1" stroke-dasharray="3 3"/><path d="M12 401.5 H727" stroke="#c4c4c4" stroke-width="1" stroke-dasharray="3 3"/><path d="M12 433.5 H727" stroke="#c4c4c4" stroke-width="1" stroke-dasharray="3 3"/><path d="M12 465.5 H727" stroke="#c4c4c4" stroke-width="1" stroke-dasharray="3 3"/><path d="M12 497.5 H727" stroke="#c4c4c4" stroke-width="1" stroke-dasharray="3 3"/><path d="M12 529.5 H727" stroke="#c4c4c4" stroke-width="1" stroke-dasharray="3 3"/><path d="M12 561.5 H727" stroke="#c4c4c4" stroke-width="1" stroke-dasharray="3 3"/><rect x="10" y="563" width="718" height="2" fill="#fff"/><path d="M11.0 544.3 L12.0 543.7 L13.0 543.9 L14.0 542.8 L15.0 543.0 L16.0 542.4 L17.0 541.6 L18.0 541.8 L19.0 540.7 L20.0 540.9 L21.0 540.0 L22.0 539.6 L23.0 539.7 L24.0 539.8 L25.0 538.5 L26.0 538.2 L27.0 538.3 L28.0 538.3 L29.0 537.5 L30.0 536.8 L31.0 537.2 L32.0 535.7 L33.0 536.5 L34.0 535.6 L35.0 535.1 L36.0 534.9 L37.0 534.9 L38.0 535.3 L39.0 534.3 L40.0 534.5 L41.0 534.4 L42.0 533.8 L43.0 533.8 L44.0 532.9 L45.0 532.7 L46.0 532.6 L47.0 533.0 L48.0 532.5 L49.0 532.1 L50.0 532.2 L51.0 531.8 L52.0 531.4 L53.0 531.8 L54.0 531.4 L55.0 530.6 L56.0 530.8 L57.0 530.5 L58.0 530.7 L59.0 530.3 L60.0 529.5 L61.0 530.1 L62.0 528.8 L63.0 528.9 L64.0 529.1 L65.0 528.1 L66.0 528.3 L67.0 527.5 L68.0 528.1 L69.0 528.0 L70.0 527.5 L71.0 527.6 L72.0 526.7 L73.0 526.9 L74.0 526.6 L75.0 526.3 L76.0 525.9 L77.0 526.2 L78.0 526.1 L79.0 525.2 L80.0 525.3 L81.0 524.2 L82.0 524.8 L83.0 524.5 L84.0 524.7 L85.0 524.3 L86.0 523.4 L87.0 523.2 L88.0 523.4 L89.0 522.3 L90.0 522.6 L91.0 515.9 L92.0 500.5 L93.0 500.1 L94.0 500.7 L95.0 499.5 L96.0 499.4 L97.0 499.2 L98.0 499.6 L99.0 498.2 L100.0 498.4 L101.0 498.2 L102.0 498.3 L103.0 497.9 L104.0 497.7 L105.0 496.6 L106.0 496.5 L107.0 496.1 L108.0 496.5 L109.0 496.2 L110.0 494.9 L111.0 494.6 L112.0 494.4 L113.0 494.1 L114.0 494.1 L115.0 493.9 L116.0 493.2 L117.0 492.5 L118.0 492.7 L119.0 492.4 L120.0 492.3 L121.0 492.5 L122.0 491.8 L123.0 491.3 L124.0 491.1 L125.0 490.9 L126.0 489.8 L127.0 490.5 L128.0 490.1 L129.0 489.9 L130.0 489.5 L131.0 488.6 L132.0 488.3 L133.0 487.6 L134.0 488.0 L135.0 487.0 L136.0 486.7 L137.0 486.5 L138.0 486.2 L139.0 486.1 L140.0 485.4 L141.0 485.0 L142.0 484.9 L143.0 484.5 L144.0 484.5 L145.0 483.8 L146.0 484.6 L147.0 483.9 L148.0 483.0 L149.0 482.8 L150.0 482.7 L151.0 482.4 L152.0 481.7 L153.0 482.4 L154.0 482.2 L155.0 481.2 L156.0 481.0 L157.0 480.1 L158.0 479.8 L159.0 479.8 L160.0 479.4 L161.0 479.8 L162.0 478.7 L163.0 478.2 L164.0 479.1 L165.0 478.2 L166.0 477.4 L167.0 477.6 L168.0 476.6 L169.0 477.0 L170.0 477.2 L171.0 476.8 L172.0 476.2 L173.0 475.4 L174.0 475.2 L175.0 474.6 L176.0 475.1 L177.0 474.6 L178.0 474.6 L179.0 473.8 L180.0 473.4 L181.0 473.9 L182.0 473.9 L183.0 473.4 L184.0 473.1 L185.0 472.9 L186.0 472.5 L187.0 471.6 L188.0 471.7 L189.0 471.2 L190.0 470.6 L191.0 470.3 L192.0 470.4 L193.0 470.1 L194.0 470.4 L195.0 470.5 L196.0 469.5 L197.0 469.9 L198.0 469.7 L199.0 469.4 L200.0 468.4 L201.0 468.0 L202.0 467.7 L203.0 467.4 L204.0 467.2 L205.0 467.4 L206.0 467.5 L207.0 467.2 L208.0 466.5 L209.0 466.4 L210.0 466.4 L211.0 465.2 L212.0 465.7 L213.0 465.7 L214.0 465.3 L215.0 465.0 L216.0 464.4 L217.0 463.8 L218.0 464.3 L219.0 463.4 L220.0 463.8 L221.0 463.8 L222.0 462.7 L223.0 462.5 L224.0 462.9 L225.0 462.4 L226.0 461.4 L227.0 461.1 L228.0 460.9 L229.0 461.6 L230.0 461.2 L231.0 460.1 L232.0 460.7 L233.0 460.7 L234.0 460.0 L235.0 459.3 L236.0 459.3 L237.0 458.5 L238.0 458.1 L239.0 459.1 L240.0 458.4 L241.0 458.0 L242.0 458.3 L243.0 457.4 L244.0 457.7 L245.0 457.4 L246.0 456.3 L247.0 456.1 L248.0 455.9 L249.0 455.6 L250.0 455.8 L251.0 455.1 L252.0 455.0 L253.0 454.4 L254.0 455.1 L255.0 454.2 L256.0 454.0 L257.0 453.9 L258.0 454.1 L259.0 453.2 L260.0 453.6 L261.0 452.7 L262.0 452.5 L263.0 452.2 L264.0 451.2 L265.0 451.4 L266.0 450.8 L267.0 450.2 L268.0 451.0 L269.0 449.8 L270.0 449.9 L271.0 450.0 L272.0 449.4 L273.0 448.8 L274.0 448.8 L275.0 448.5 L276.0 448.5 L277.0 447.3 L278.0 447.6 L279.0 446.9 L280.0 446.6 L281.0 446.9 L282.0 446.3 L283.0 446.0 L284.0 446.0 L285.0 445.9 L286.0 445.0 L287.0 444.9 L288.0 444.4 L289.0 444.1 L290.0 444.1 L291.0 443.4 L292.0 443.2 L293.0 442.8 L294.0 443.1 L295.0 442.5 L296.0 442.4 L297.0 442.2 L298.0 441.0 L299.0 441.1 L300.0 441.3 L301.0 440.9 L302.0 439.6 L303.0 439.3 L304.0 439.4 L305.0 438.6 L306.0 438.5 L307.0 438.0 L308.0 438.5 L309.0 438.3 L310.0 438.2 L311.0 436.9 L312.0 437.3 L313.0 436.9 L314.0 435.9 L315.0 436.6 L316.0 436.4 L317.0 435.1 L318.0 435.8 L319.0 434.7 L320.0 434.5 L321.0 434.9 L322.0 434.4 L323.0 433.2 L324.0 433.2 L325.0 433.0 L326.0 432.5 L327.0 432.0 L328.0 431.9 L329.0 432.1 L330.0 430.8 L331.0 431.2 L332.0 430.8 L333.0 429.9 L334.0 430.0 L335.0 430.1 L336.0 429.6 L337.0 428.7 L338.0 429.6 L339.0 429.1 L340.0 429.0 L341.0 427.6 L342.0 427.5 L343.0 426.9 L344.0 427.5 L345.0 426.5 L346.0 426.1 L347.0 426.1 L348.0 426.5 L349.0 426.0 L350.0 425.0 L351.0 424.5 L352.0 425.2 L353.0 424.5 L354.0 424.3 L355.0 423.2 L356.0 422.9 L357.0 423.4 L358.0 422.7 L359.0 422.0 L360.0 422.8 L361.0 422.1 L362.0 422.0 L363.0 420.8 L364.0 420.7 L365.0 415.9 L366.0 413.0 L367.0 412.2 L368.0 411.7 L369.0 411.7 L370.0 411.9 L371.0 410.7 L372.0 410.2 L373.0 410.4 L374.0 409.7 L375.0 409.3 L376.0 409.0 L377.0 408.6 L378.0 408.4 L379.0 408.3 L380.0 408.0 L381.0 408.2 L382.0 407.3 L383.0 407.3 L384.0 406.5 L385.0 406.5 L386.0 405.7 L387.0 405.7 L388.0 405.1 L389.0 405.7 L390.0 405.2 L391.0 404.4 L392.0 404.5 L393.0 404.7 L394.0 403.4 L395.0 404.0 L396.0 403.2 L397.0 402.9 L398.0 403.1 L399.0 402.2 L400.0 402.0 L401.0 401.9 L402.0 402.0 L403.0 400.9 L404.0 401.2 L405.0 400.7 L406.0 400.3 L407.0 399.7 L408.0 399.3 L409.0 398.6 L410.0 398.4 L411.0 398.0 L412.0 398.6 L413.0 397.7 L414.0 397.2 L415.0 396.8 L416.0 397.5 L417.0 397.2 L418.0 396.6 L419.0 395.8 L420.0 395.5 L421.0 395.2 L422.0 395.1 L423.0 394.4 L424.0 394.5 L425.0 393.9 L426.0 394.5 L427.0 394.2 L428.0 393.4 L429.0 392.7 L430.0 393.3 L431.0 392.1 L432.0 391.9 L433.0 391.1 L434.0 391.3 L435.0 391.1 L436.0 390.8 L437.0 390.1 L438.0 390.2 L439.0 389.3 L440.0 389.3 L441.0 388.8 L442.0 388.8 L443.0 388.1 L444.0 387.7 L445.0 387.8 L446.0 387.4 L447.0 387.5 L448.0 387.2 L449.0 387.1 L450.0 386.7 L451.0 386.5 L452.0 386.4 L453.0 385.4 L454.0 385.0 L455.0 385.6 L456.0 384.2 L457.0 384.6 L458.0 384.2 L459.0 383.1 L460.0 383.8 L461.0 383.6 L462.0 382.9 L463.0 382.8 L464.0 382.6 L465.0 381.4 L466.0 381.6 L467.0 381.2 L468.0 381.3 L469.0 381.0 L470.0 380.7 L471.0 380.1 L472.0 380.2 L473.0 379.6 L474.0 379.3 L475.0 378.4 L476.0 377.8 L477.0 377.6 L478.0 377.6 L479.0 377.0 L480.0 377.6 L481.0 377.0 L482.0 376.7 L483.0 376.4 L484.0 376.2 L485.0 375.6 L486.0 374.7 L487.0 375.4 L488.0 375.0 L489.0 374.1 L490.0 373.1 L491.0 372.3 L492.0 371.2 L493.0 371.8 L494.0 370.9 L495.0 370.4 L496.0 370.3 L497.0 370.7 L498.0 369.7 L499.0 370.1 L500.0 370.1 L501.0 369.2 L502.0 368.8 L503.0 368.6 L504.0 368.6 L505.0 368.4 L506.0 368.0 L507.0 367.7 L508.0 366.7 L509.0 366.5 L510.0 366.4 L511.0 366.7 L512.0 365.9 L513.0 365.9 L514.0 364.9 L515.0 364.7 L516.0 364.7 L517.0 364.9 L518.0 364.7 L519.0 364.4 L520.0 363.6 L521.0 363.6 L522.0 363.2 L523.0 363.0 L524.0 362.2 L525.0 363.0 L526.0 361.8 L527.0 362.5 L528.0 362.2 L529.0 360.7 L530.0 361.0 L531.0 361.2 L532.0 361.1 L533.0 360.1 L534.0 359.6 L535.0 359.2 L536.0 359.9 L537.0 358.7 L538.0 358.9 L539.0 358.0 L540.0 358.2 L541.0 358.5 L542.0 357.2 L543.0 357.8 L544.0 357.1 L545.0 357.3 L546.0 356.8 L547.0 355.9 L548.0 356.5 L549.0 355.6 L550.0 354.8 L551.0 354.4 L552.0 354.8 L553.0 354.5 L554.0 354.0 L555.0 353.5 L556.0 353.5 L557.0 353.2 L558.0 353.6 L559.0 352.2 L560.0 352.9 L561.0 352.7 L562.0 351.4 L563.0 352.1 L564.0 351.5 L565.0 351.4 L566.0 350.3 L567.0 350.1 L568.0 349.8 L569.0 350.2 L570.0 349.4 L571.0 348.7 L572.0 348.5 L573.0 348.0 L574.0 347.3 L575.0 347.1 L576.0 347.7 L577.0 346.7 L578.0 347.2 L579.0 346.0 L580.0 345.6 L581.0 345.6 L582.0 344.9 L583.0 344.8 L584.0 345.2 L585.0 344.8 L586.0 344.4 L587.0 343.8 L588.0 343.8 L589.0 343.5 L590.0 342.7 L591.0 342.6 L592.0 341.4 L593.0 342.0 L594.0 341.3 L595.0 341.3 L596.0 340.9 L597.0 340.1 L598.0 339.4 L599.0 340.2 L600.0 338.9 L601.0 339.0 L602.0 338.5 L603.0 338.1 L604.0 338.3 L605.0 338.3 L606.0 337.0 L607.0 337.2 L608.0 336.4 L609.0 336.4 L610.0 335.9 L611.0 335.3 L612.0 334.9 L613.0 334.7 L614.0 335.2 L615.0 334.4 L616.0 333.7 L617.0 334.3 L618.0 334.0 L619.0 333.0 L620.0 332.3 L621.0 332.0 L622.0 331.5 L623.0 331.5 L624.0 330.9 L625.0 330.8 L626.0 330.6 L627.0 330.7 L628.0 330.9 L629.0 330.4 L630.0 329.7 L631.0 329.5 L632.0 329.4 L633.0 328.9 L634.0 328.6 L635.0 328.0 L636.0 328.0 L637.0 328.6 L638.0 327.3 L639.0 327.5 L640.0 327.4 L641.0 327.4 L642.0 326.3 L643.0 326.1 L644.0 325.8 L645.0 325.8 L646.0 325.6 L647.0 326.0 L648.0 325.6 L649.0 325.3 L650.0 324.0 L651.0 323.7 L652.0 324.3 L653.0 324.3 L654.0 323.5 L655.0 323.4 L656.0 322.3 L657.0 322.6 L658.0 323.0 L659.0 322.6 L660.0 322.4 L661.0 322.3 L662.0 321.1 L663.0 320.6 L664.0 320.4 L665.0 320.6 L666.0 320.6 L667.0 320.7 L668.0 320.1 L669.0 319.7 L670.0 319.6 L671.0 319.0 L672.0 318.8 L673.0 317.9 L674.0 318.6 L675.0 317.6 L676.0 318.3 L677.0 317.6 L678.0 316.9 L679.0 316.4 L680.0 316.3 L681.0 316.6 L682.0 316.4 L683.0 315.4 L684.0 315.0 L685.0 315.4 L686.0 315.2 L687.0 314.7 L688.0 314.2 L689.0 314.4 L690.0 313.4 L691.0 313.5 L692.0 313.4 L693.0 313.8 L694.0 313.1 L695.0 313.2 L696.0 312.4 L697.0 311.8 L698.0 311.6 L699.0 312.2 L700.0 311.6 L701.0 310.9 L702.0 310.2 L703.0 310.6 L704.0 310.5 L705.0 309.9 L706.0 309.5 L707.0 309.7 L708.0 309.8 L709.0 308.6 L710.0 308.1 L711.0 308.3 L712.0 308.1 L713.0 308.2 L714.0 307.3 L715.0 307.8 L716.0 307.5 L717.0 306.9 L718.0 306.2 L719.0 307.0 L720.0 305.8 L721.0 306.2 L722.0 305.2 L723.0 304.9 L724.0 305.4 L725.0 304.5 L726.0 305.2 L727.0 304.3" stroke="#12a012" stroke-width="2" fill="none"/><path d="M30.5 535.4 V552.4" stroke="#12a012" stroke-width="2"/><path d="M90.5 521.1 V536.1" stroke="#12a012" stroke-width="2"/><path d="M219.5 462.1 V469.1" stroke="#12a012" stroke-width="1.500"/><path d="M232.5 458.7 V473.7" stroke="#12a012" stroke-width="2"/><path d="M238.5 457.2 V479.2" stroke="#12a012" stroke-width="2"/><path d="M283.5 444.4 V457.4" stroke="#12a012" stroke-width="2"/><path d="M290.5 442.3 V452.3" stroke="#12a012" stroke-width="2"/><path d="M291.5 441.9 V450.9" stroke="#12a012" stroke-width="2"/><path d="M301.5 438.9 V463.9" stroke="#12a012" stroke-width="2"/><path d="M305.5 437.6 V447.6" stroke="#12a012" stroke-width="2"/><path d="M312.5 435.5 V459.5" stroke="#12a012" stroke-width="2"/><path d="M314.5 434.9 V451.9" stroke="#12a012" stroke-width="2"/><path d="M324.5 431.8 V443.8" stroke="#12a012" stroke-width="2"/><path d="M329.5 430.2 V444.2" stroke="#12a012" stroke-width="2"/><path d="M340.5 426.8 V432.8" stroke="#12a012" stroke-width="1.500"/><path d="M346.5 425.0 V432.0" stroke="#12a012" stroke-width="1.500"/><path d="M352.5 423.1 V429.1" stroke="#12a012" stroke-width="1.500"/><path d="M358.5 421.3 V428.3" stroke="#12a012" stroke-width="1.500"/><path d="M383.5 405.7 V411.7" stroke="#12a012" stroke-width="1.500"/><path d="M400.5 400.5 V407.5" stroke="#12a012" stroke-width="1.500"/><path d="M405.5 398.9 V408.9" stroke="#12a012" stroke-width="2"/><path d="M409.5 397.7 V405.7" stroke="#12a012" stroke-width="1.500"/><path d="M415.5 395.8 V414.8" stroke="#12a012" stroke-width="2"/><path d="M443.5 387.1 V394.1" stroke="#12a012" stroke-width="1.500"/><path d="M453.5 384.0 V398.0" stroke="#12a012" stroke-width="2"/><path d="M460.5 381.8 V387.8" stroke="#12a012" stroke-width="1.500"/><path d="M468.5 379.4 V385.4" stroke="#12a012" stroke-width="1.500"/><path d="M476.5 376.9 V383.9" stroke="#12a012" stroke-width="1.500"/><path d="M568.5 348.4 V355.4" stroke="#12a012" stroke-width="1.500"/><path d="M580.5 344.4 V350.4" stroke="#12a012" stroke-width="1.500"/><path d="M596.5 339.1 V346.1" stroke="#12a012" stroke-width="1.500"/><path d="M612.5 333.8 V339.8" stroke="#12a012" stroke-width="1.500"/><path d="M623.5 330.2 V345.2" stroke="#12a012" stroke-width="2"/><path d="M624.5 329.9 V340.9" stroke="#12a012" stroke-width="2"/><path d="M640.5 325.7 V331.7" stroke="#12a012" stroke-width="1.500"/><path d="M652.5 322.5 V329.5" stroke="#12a012" stroke-width="1.500"/><path d="M662.5 319.9 V325.9" stroke="#12a012" stroke-width="1.500"/><path d="M679.5 315.4 V322.4" stroke="#12a012" stroke-width="1.500"/><path d="M700.5 309.8 V320.8" stroke="#12a012" stroke-width="2"/><path d="M701.5 309.6 V317.6" stroke="#12a012" stroke-width="1.500"/><path d="M712.5 306.6 V311.6" stroke="#12a012" stroke-width="1.500"/><path d="M40.5 532.9 V538.9" stroke="#12a012" stroke-width="1.500"/><path d="M52.5 530.1 V537.1" stroke="#12a012" stroke-width="1.500"/><path d="M60.5 528.2 V533.2" stroke="#12a012" stroke-width="1.500"/><path d="M70.5 525.8 V531.8" stroke="#12a012" stroke-width="1.500"/><path d="M78.5 524.0 V531.0" stroke="#12a012" stroke-width="1.500"/><path d="M104.5 495.7 V501.7" stroke="#12a012" stroke-width="1.500"/><path d="M112.5 493.2 V500.2" stroke="#12a012" stroke-width="1.500"/><path d="M121.5 490.4 V496.4" stroke="#12a012" stroke-width="1.500"/><path d="M133.5 486.6 V493.6" stroke="#12a012" stroke-width="1.500"/><path d="M142.5 483.8 V489.8" stroke="#12a012" stroke-width="1.500"/><path d="M150.5 481.3 V489.3" stroke="#12a012" stroke-width="1.500"/><path d="M160.5 478.2 V484.2" stroke="#12a012" stroke-width="1.500"/><path d="M171.5 474.7 V481.7" stroke="#12a012" stroke-width="1.500"/><path d="M184.5 471.2 V477.2" stroke="#12a012" stroke-width="1.500"/><path d="M196.5 468.1 V475.1" stroke="#12a012" stroke-width="1.500"/><path d="M205.5 465.7 V471.7" stroke="#12a012" stroke-width="1.500"/><path d="M247.5 454.9 V461.9" stroke="#12a012" stroke-width="1.500"/><path d="M255.5 452.8 V458.8" stroke="#12a012" stroke-width="1.500"/><path d="M266.5 449.7 V456.7" stroke="#12a012" stroke-width="1.500"/><path d="M274.5 447.2 V453.2" stroke="#12a012" stroke-width="1.500"/><path d="M500.5 368.0 V374.0" stroke="#12a012" stroke-width="1.500"/><path d="M510.5 365.1 V372.1" stroke="#12a012" stroke-width="1.500"/><path d="M520.5 362.3 V367.3" stroke="#12a012" stroke-width="1.500"/><path d="M533.5 358.6 V365.6" stroke="#12a012" stroke-width="1.500"/><path d="M545.5 355.2 V361.2" stroke="#12a012" stroke-width="1.500"/><path d="M552.5 353.3 V360.3" stroke="#12a012" stroke-width="1.500"/><path d="M31.5 523.0 V535.0" stroke="#0a0a9c" stroke-width="1.600"/><path d="M453.5 377.0 V384.0" stroke="#12a012" stroke-width="1.600"/><path d="M415.5 391.8 V395.8" stroke="#0a0a9c" stroke-width="1.600"/><path d="M312.5 431.5 V435.5" stroke="#0a0a9c" stroke-width="1.600"/><path d="M724.5 300.5 V303.5" stroke="#0a0a9c" stroke-width="1.600"/><path d="M11.0 542.7 L12.0 542.4 L13.0 542.1 L14.0 541.9 L15.0 541.8 L16.0 540.7 L17.0 540.5 L18.0 540.0 L19.0 540.2 L20.0 539.1 L21.0 538.6 L22.0 538.2 L23.0 538.1 L24.0 538.1 L25.0 537.7 L26.0 537.2 L27.0 537.0 L28.0 536.5 L29.0 535.7 L30.0 535.1 L31.0 535.3 L32.0 535.0 L33.0 534.2 L34.0 534.4 L35.0 534.0 L36.0 533.7 L37.0 533.5 L38.0 533.1 L39.0 532.7 L40.0 532.7 L41.0 532.5 L42.0 532.8 L43.0 531.9 L44.0 532.3 L45.0 531.5 L46.0 531.4 L47.0 531.5 L48.0 531.3 L49.0 530.7 L50.0 530.2 L51.0 530.3 L52.0 530.0 L53.0 530.2 L54.0 529.4 L55.0 529.3 L56.0 529.4 L57.0 528.5 L58.0 528.6 L59.0 528.7 L60.0 528.4 L61.0 527.6 L62.0 527.3 L63.0 527.1 L64.0 527.6 L65.0 526.8 L66.0 527.0 L67.0 526.9 L68.0 526.2 L69.0 525.9 L70.0 526.2 L71.0 525.7 L72.0 525.2 L73.0 525.3 L74.0 524.8 L75.0 524.5 L76.0 524.0 L77.0 524.4 L78.0 524.3 L79.0 523.8 L80.0 523.8 L81.0 522.9 L82.0 522.8 L83.0 522.8 L84.0 522.9 L85.0 522.7 L86.0 522.0 L87.0 521.6 L88.0 521.6 L89.0 521.4 L90.0 521.5 L91.0 514.6 L92.0 499.6 L93.0 499.3 L94.0 499.0 L95.0 498.7 L96.0 498.2 L97.0 497.7 L98.0 497.4 L99.0 497.1 L100.0 497.1 L101.0 496.3 L102.0 496.0 L103.0 496.2 L104.0 495.5 L105.0 495.0 L106.0 494.7 L107.0 494.8 L108.0 494.3 L109.0 494.5 L110.0 494.1 L111.0 493.9 L112.0 493.0 L113.0 492.5 L114.0 492.2 L115.0 492.2 L116.0 492.1 L117.0 491.6 L118.0 491.1 L119.0 490.9 L120.0 490.8 L121.0 490.5 L122.0 490.2 L123.0 490.0 L124.0 489.5 L125.0 488.8 L126.0 489.1 L127.0 488.3 L128.0 488.2 L129.0 487.8 L130.0 487.7 L131.0 487.0 L132.0 486.7 L133.0 486.4 L134.0 486.0 L135.0 486.3 L136.0 485.7 L137.0 485.2 L138.0 485.0 L139.0 485.1 L140.0 484.4 L141.0 483.9 L142.0 484.0 L143.0 483.6 L144.0 483.6 L145.0 482.5 L146.0 482.5 L147.0 482.5 L148.0 482.2 L149.0 481.9 L150.0 480.9 L151.0 480.8 L152.0 480.4 L153.0 480.1 L154.0 480.4 L155.0 479.8 L156.0 479.8 L157.0 479.0 L158.0 479.1 L159.0 478.5 L160.0 478.0 L161.0 478.1 L162.0 477.9 L163.0 476.9 L164.0 477.0 L165.0 476.7 L166.0 476.1 L167.0 475.9 L168.0 475.4 L169.0 475.1 L170.0 474.9 L171.0 474.8 L172.0 474.6 L173.0 473.9 L174.0 473.4 L175.0 473.4 L176.0 473.4 L177.0 472.7 L178.0 472.6 L179.0 472.2 L180.0 472.4 L181.0 472.0 L182.0 471.3 L183.0 471.1 L184.0 471.1 L185.0 471.0 L186.0 470.8 L187.0 470.1 L188.0 469.9 L189.0 470.0 L190.0 469.5 L191.0 469.2 L192.0 468.9 L193.0 469.2 L194.0 468.4 L195.0 468.4 L196.0 468.0 L197.0 467.7 L198.0 467.8 L199.0 467.7 L200.0 466.9 L201.0 466.5 L202.0 466.7 L203.0 466.0 L204.0 465.6 L205.0 466.1 L206.0 465.4 L207.0 465.5 L208.0 464.9 L209.0 465.0 L210.0 464.4 L211.0 463.9 L212.0 463.5 L213.0 463.7 L214.0 463.5 L215.0 463.5 L216.0 462.6 L217.0 462.7 L218.0 462.3 L219.0 462.1 L220.0 461.6 L221.0 461.4 L222.0 461.4 L223.0 461.4 L224.0 460.5 L225.0 460.6 L226.0 460.5 L227.0 460.4 L228.0 459.5 L229.0 459.2 L230.0 459.6 L231.0 459.4 L232.0 458.7 L233.0 458.1 L234.0 458.6 L235.0 457.9 L236.0 458.0 L237.0 457.5 L238.0 457.5 L239.0 456.7 L240.0 456.9 L241.0 456.2 L242.0 456.1 L243.0 456.2 L244.0 455.9 L245.0 455.1 L246.0 454.9 L247.0 454.8 L248.0 454.6 L249.0 454.3 L250.0 453.8 L251.0 453.6 L252.0 453.8 L253.0 453.6 L254.0 452.7 L255.0 452.8 L256.0 452.7 L257.0 451.9 L258.0 452.3 L259.0 451.5 L260.0 451.6 L261.0 451.2 L262.0 451.0 L263.0 450.4 L264.0 450.2 L265.0 450.0 L266.0 449.6 L267.0 449.5 L268.0 449.0 L269.0 448.7 L270.0 448.0 L271.0 448.2 L272.0 447.8 L273.0 447.3 L274.0 447.4 L275.0 447.1 L276.0 446.5 L277.0 446.0 L278.0 445.9 L279.0 445.3 L280.0 445.0 L281.0 445.0 L282.0 444.4 L283.0 444.4 L284.0 444.1 L285.0 443.4 L286.0 443.6 L287.0 442.8 L288.0 443.1 L289.0 442.8 L290.0 442.3 L291.0 441.6 L292.0 441.6 L293.0 441.2 L294.0 441.4 L295.0 440.4 L296.0 440.7 L297.0 440.5 L298.0 440.0 L299.0 439.7 L300.0 438.9 L301.0 439.2 L302.0 438.5 L303.0 438.6 L304.0 438.3 L305.0 437.4 L306.0 437.5 L307.0 437.4 L308.0 436.4 L309.0 436.3 L310.0 436.3 L311.0 435.5 L312.0 435.8 L313.0 435.0 L314.0 435.1 L315.0 434.3 L316.0 434.2 L317.0 434.3 L318.0 433.4 L319.0 433.1 L320.0 433.0 L321.0 432.5 L322.0 432.0 L323.0 431.8 L324.0 431.5 L325.0 431.8 L326.0 431.3 L327.0 431.2 L328.0 430.3 L329.0 430.5 L330.0 429.6 L331.0 429.6 L332.0 429.4 L333.0 428.9 L334.0 429.0 L335.0 428.4 L336.0 428.1 L337.0 428.1 L338.0 427.1 L339.0 427.5 L340.0 426.9 L341.0 426.4 L342.0 426.5 L343.0 425.7 L344.0 426.0 L345.0 425.4 L346.0 424.9 L347.0 424.9 L348.0 424.3 L349.0 423.8 L350.0 423.9 L351.0 423.1 L352.0 423.4 L353.0 422.6 L354.0 422.6 L355.0 422.6 L356.0 422.0 L357.0 421.7 L358.0 421.1 L359.0 420.6 L360.0 420.3 L361.0 420.1 L362.0 420.1 L363.0 419.7 L364.0 418.7 L365.0 415.2 L366.0 410.7 L367.0 410.5 L368.0 410.5 L369.0 409.7 L370.0 409.4 L371.0 409.3 L372.0 408.8 L373.0 408.7 L374.0 408.3 L375.0 408.3 L376.0 408.0 L377.0 407.4 L378.0 407.4 L379.0 406.9 L380.0 406.4 L381.0 406.7 L382.0 405.8 L383.0 405.4 L384.0 405.1 L385.0 405.2 L386.0 405.1 L387.0 404.7 L388.0 404.1 L389.0 403.7 L390.0 403.2 L391.0 403.4 L392.0 403.0 L393.0 402.5 L394.0 402.4 L395.0 402.0 L396.0 402.0 L397.0 401.6 L398.0 400.9 L399.0 401.1 L400.0 400.1 L401.0 400.2 L402.0 399.8 L403.0 399.3 L404.0 398.9 L405.0 399.1 L406.0 398.2 L407.0 398.3 L408.0 398.3 L409.0 397.4 L410.0 397.1 L411.0 397.1 L412.0 396.7 L413.0 396.5 L414.0 396.4 L415.0 395.5 L416.0 395.3 L417.0 395.0 L418.0 394.5 L419.0 394.9 L420.0 394.5 L421.0 394.1 L422.0 393.2 L423.0 393.6 L424.0 393.2 L425.0 392.7 L426.0 392.6 L427.0 392.0 L428.0 391.5 L429.0 391.1 L430.0 390.9 L431.0 390.5 L432.0 390.4 L433.0 390.4 L434.0 390.1 L435.0 389.9 L436.0 389.5 L437.0 388.8 L438.0 388.7 L439.0 388.3 L440.0 388.3 L441.0 387.8 L442.0 387.2 L443.0 387.2 L444.0 387.2 L445.0 386.3 L446.0 386.5 L447.0 385.5 L448.0 385.4 L449.0 385.0 L450.0 385.1 L451.0 385.0 L452.0 384.5 L453.0 383.9 L454.0 384.0 L455.0 383.3 L456.0 382.9 L457.0 383.1 L458.0 382.6 L459.0 382.3 L460.0 382.0 L461.0 381.9 L462.0 381.2 L463.0 381.2 L464.0 380.8 L465.0 380.6 L466.0 379.9 L467.0 379.8 L468.0 379.4 L469.0 378.9 L470.0 378.5 L471.0 378.5 L472.0 377.8 L473.0 378.1 L474.0 377.2 L475.0 376.8 L476.0 376.6 L477.0 376.9 L478.0 376.1 L479.0 375.7 L480.0 375.3 L481.0 375.0 L482.0 375.2 L483.0 374.8 L484.0 374.6 L485.0 374.3 L486.0 373.4 L487.0 373.5 L488.0 373.0 L489.0 372.8 L490.0 371.8 L491.0 370.8 L492.0 369.9 L493.0 370.2 L494.0 370.0 L495.0 369.7 L496.0 368.8 L497.0 368.6 L498.0 368.2 L499.0 367.9 L500.0 368.2 L501.0 367.9 L502.0 367.5 L503.0 367.4 L504.0 366.9 L505.0 366.4 L506.0 365.9 L507.0 365.7 L508.0 365.9 L509.0 365.2 L510.0 365.0 L511.0 364.8 L512.0 364.2 L513.0 364.1 L514.0 363.8 L515.0 363.9 L516.0 363.3 L517.0 363.0 L518.0 363.2 L519.0 362.6 L520.0 362.6 L521.0 362.1 L522.0 361.4 L523.0 361.4 L524.0 361.1 L525.0 361.1 L526.0 360.5 L527.0 360.5 L528.0 360.1 L529.0 359.5 L530.0 359.8 L531.0 358.9 L532.0 359.2 L533.0 358.4 L534.0 357.9 L535.0 357.8 L536.0 358.0 L537.0 357.9 L538.0 356.8 L539.0 356.9 L540.0 356.6 L541.0 356.6 L542.0 355.8 L543.0 355.8 L544.0 355.4 L545.0 355.5 L546.0 354.8 L547.0 355.0 L548.0 354.2 L549.0 353.9 L550.0 354.0 L551.0 353.5 L552.0 352.9 L553.0 353.1 L554.0 352.4 L555.0 352.6 L556.0 352.3 L557.0 352.1 L558.0 351.7 L559.0 351.2 L560.0 350.9 L561.0 350.6 L562.0 350.7 L563.0 349.7 L564.0 350.0 L565.0 349.0 L566.0 348.8 L567.0 348.5 L568.0 348.7 L569.0 348.0 L570.0 347.6 L571.0 347.7 L572.0 346.8 L573.0 346.7 L574.0 346.4 L575.0 346.3 L576.0 345.9 L577.0 345.5 L578.0 344.9 L579.0 344.6 L580.0 344.1 L581.0 344.3 L582.0 343.9 L583.0 343.6 L584.0 342.8 L585.0 342.7 L586.0 342.6 L587.0 342.1 L588.0 341.5 L589.0 341.4 L590.0 341.4 L591.0 340.6 L592.0 340.2 L593.0 339.9 L594.0 339.9 L595.0 339.7 L596.0 338.8 L597.0 338.5 L598.0 338.3 L599.0 338.0 L600.0 337.8 L601.0 337.2 L602.0 337.0 L603.0 336.6 L604.0 336.9 L605.0 336.3 L606.0 335.5 L607.0 335.9 L608.0 334.8 L609.0 334.7 L610.0 334.9 L611.0 334.4 L612.0 334.0 L613.0 333.4 L614.0 332.9 L615.0 333.0 L616.0 332.2 L617.0 331.9 L618.0 331.8 L619.0 331.1 L620.0 331.1 L621.0 331.1 L622.0 330.7 L623.0 330.2 L624.0 330.0 L625.0 329.6 L626.0 329.1 L627.0 329.2 L628.0 328.8 L629.0 328.8 L630.0 328.6 L631.0 328.0 L632.0 327.8 L633.0 327.7 L634.0 327.2 L635.0 326.8 L636.0 326.9 L637.0 326.8 L638.0 326.4 L639.0 326.1 L640.0 325.9 L641.0 325.5 L642.0 325.3 L643.0 324.8 L644.0 324.5 L645.0 324.4 L646.0 323.8 L647.0 323.8 L648.0 323.8 L649.0 323.5 L650.0 323.1 L651.0 322.6 L652.0 322.4 L653.0 322.2 L654.0 322.1 L655.0 321.6 L656.0 321.6 L657.0 321.5 L658.0 320.7 L659.0 320.8 L660.0 320.6 L661.0 320.0 L662.0 319.8 L663.0 320.0 L664.0 319.0 L665.0 319.1 L666.0 318.5 L667.0 318.8 L668.0 318.6 L669.0 318.0 L670.0 317.4 L671.0 317.5 L672.0 317.2 L673.0 317.1 L674.0 316.7 L675.0 316.5 L676.0 316.4 L677.0 315.9 L678.0 315.6 L679.0 315.7 L680.0 314.9 L681.0 315.0 L682.0 314.5 L683.0 314.5 L684.0 313.7 L685.0 314.2 L686.0 313.4 L687.0 312.9 L688.0 312.8 L689.0 312.6 L690.0 312.1 L691.0 312.1 L692.0 311.9 L693.0 311.8 L694.0 311.3 L695.0 311.0 L696.0 310.7 L697.0 310.8 L698.0 310.7 L699.0 310.1 L700.0 309.6 L701.0 309.8 L702.0 309.2 L703.0 308.8 L704.0 308.5 L705.0 308.7 L706.0 308.5 L707.0 308.1 L708.0 307.7 L709.0 307.5 L710.0 307.0 L711.0 307.3 L712.0 306.5 L713.0 306.5 L714.0 306.4 L715.0 306.1 L716.0 305.6 L717.0 305.2 L718.0 305.1 L719.0 304.5 L720.0 304.8 L721.0 304.2 L722.0 304.3 L723.0 303.6 L724.0 303.4 L725.0 303.0 L726.0 303.0 L727.0 302.5" stroke="#0a0a9c" stroke-width="2.400" fill="none" stroke-linejoin="round"/><path d="M12 633 V627.0 H13 V607.0 H14 V611.0 H15 V627.0 H16 V628.3 H17 V627.0 H18 V621.0 H19 V618.0 H20 V622.0 H21 V628.0 H22 V628.1 H23 V627.0 H24 V610.0 H25 V611.0 H26 V618.0 H27 V627.0 H28 V627.3 H29 V627.0 H30 V615.0 H31 V619.0 H32 V627.5 H33 V616.0 H34 V619.0 H35 V627.3 H36 V628.7 H37 V627.8 H38 V623.0 H39 V624.0 H40 V627.0 H41 V627.7 H42 V627.0 H43 V627.0 H44 V628.5 H45 V627.0 H46 V627.2 H47 V627.0 H48 V627.0 H49 V621.0 H50 V618.0 H51 V621.0 H52 V627.0 H53 V627.9 H54 V627.0 H55 V627.0 H56 V623.0 H57 V623.0 H58 V623.0 H59 V624.0 H60 V628.9 H61 V627.3 H62 V618.7 H63 V624.5 H64 V620.7 H65 V626.4 H66 V621.7 H67 V627.9 H69 V622.7 H70 V623.0 H72 V626.4 H73 V629.1 H75 V627.2 H77 V628.9 H78 V620.2 H79 V628.2 H81 V627.1 H82 V628.6 H83 V628.5 H85 V627.0 H86 V627.7 H87 V628.4 H88 V623.8 H90 V627.4 H91 V622.2 H92 V629.1 H94 V627.5 H96 V628.0 H97 V622.0 H99 V617.8 H100 V618.3 H101 V627.3 H103 V628.5 H104 V627.1 H105 V626.8 H107 V629.2 H108 V628.0 H109 V621.3 H111 V624.7 H113 V629.4 H114 V629.0 H115 V629.8 H116 V628.4 H118 V626.5 H119 V627.6 H121 V623.9 H122 V620.4 H123 V627.1 H125 V627.4 H126 V626.1 H127 V628.1 H128 V628.9 H130 V625.0 H131 V628.1 H132 V627.4 H134 V629.4 H135 V626.0 H137 V625.1 H138 V628.8 H139 V629.8 H141 V628.9 H142 V628.8 H143 V629.8 H144 V627.5 H145 V627.9 H146 V627.8 H148 V626.3 H150 V627.4 H151 V629.8 H152 V627.2 H153 V626.2 H154 V627.5 H155 V623.5 H157 V628.5 H158 V628.8 H159 V628.2 H160 V627.5 H161 V629.3 H162 V630.3 H163 V630.1 H164 V627.5 H166 V628.1 H167 V629.9 H168 V629.8 H170 V628.0 H171 V628.0 H172 V627.8 H173 V627.3 H174 V628.5 H175 V629.3 H177 V627.8 H178 V630.2 H180 V630.1 H182 V629.9 H183 V630.4 H184 V621.9 H186 V630.3 H188 V628.1 H189 V628.2 H190 V617.9 H192 V622.4 H194 V626.9 H195 V629.6 H196 V630.4 H197 V629.7 H198 V627.3 H200 V627.9 H201 V629.7 H202 V628.5 H204 V627.8 H206 V625.6 H207 V630.0 H209 V628.4 H211 V628.9 H213 V627.2 H214 V628.4 H215 V628.1 H217 V619.1 H219 V629.8 H220 V629.4 H221 V626.9 H222 V630.1 H223 V628.6 H225 V630.4 H226 V627.7 H227 V624.2 H229 V629.2 H230 V629.5 H231 V628.7 H232 V625.4 H234 V629.2 H235 V627.8 H236 V627.6 H237 V628.7 H239 V629.9 H241 V625.9 H243 V629.7 H244 V629.4 H246 V623.9 H247 V628.8 H248 V627.6 H249 V621.8 H250 V628.9 H251 V627.4 H252 V629.2 H253 V628.5 H254 V628.0 H255 V629.7 H257 V627.6 H258 V628.7 H260 V630.1 H262 V627.9 H263 V627.9 H265 V626.8 H266 V628.7 H268 V628.1 H269 V627.2 H271 V629.2 H272 V630.2 H273 V627.6 H274 V625.9 H275 V626.8 H276 V627.7 H277 V628.6 H279 V628.3 H281 V629.4 H283 V625.0 H284 V629.4 H286 V627.0 H288 V629.0 H290 V627.8 H292 V626.8 H294 V627.6 H295 V630.0 H297 V628.4 H298 V627.8 H300 V628.9 H301 V628.3 H302 V628.7 H304 V622.6 H305 V627.1 H307 V623.7 H309 V629.7 H311 V628.2 H313 V627.1 H315 V626.6 H316 V628.0 H318 V628.5 H319 V629.5 H321 V620.7 H322 V627.8 H324 V630.3 H325 V624.0 H327 V630.4 H328 V629.6 H329 V629.6 H331 V619.2 H333 V626.3 H335 V630.4 H337 V630.0 H338 V630.5 H339 V626.7 H341 V629.5 H343 V629.2 H344 V628.6 H346 V629.1 H347 V629.0 H348 V626.2 H350 V630.0 H351 V629.4 H353 V629.6 H354 V629.8 H355 V627.7 H356 V627.8 H358 V628.9 H359 V629.9 H361 V625.1 H362 V630.4 H364 V629.6 H365 V628.4 H366 V629.5 H367 V630.3 H368 V625.3 H370 V627.0 H371 V629.4 H372 V628.2 H374 V626.2 H375 V620.1 H376 V629.4 H378 V627.2 H379 V624.6 H380 V625.3 H381 V629.6 H383 V626.8 H384 V629.7 H386 V620.0 H388 V627.8 H389 V624.3 H391 V629.9 H392 V629.2 H393 V627.7 H395 V627.2 H397 V629.0 H399 V629.2 H400 V625.2 H401 V629.7 H403 V628.6 H404 V626.9 H405 V630.1 H406 V627.7 H408 V630.1 H410 V630.1 H411 V625.5 H413 V629.2 H415 V628.7 H416 V626.8 H418 V621.2 H419 V628.4 H420 V630.0 H421 V629.1 H423 V629.1 H424 V630.2 H426 V629.7 H428 V629.0 H430 V630.5 H431 V628.6 H432 V625.6 H433 V628.2 H434 V629.4 H435 V628.0 H437 V630.2 H438 V627.5 H439 V629.5 H440 V627.7 H442 V622.0 H443 V627.8 H445 V629.2 H447 V628.7 H448 V626.7 H449 V624.7 H451 V630.5 H452 V626.6 H454 V628.4 H456 V629.2 H457 V626.6 H458 V628.1 H460 V628.6 H462 V629.2 H464 V627.6 H465 V630.3 H467 V626.4 H468 V629.1 H469 V627.9 H470 V625.0 H471 V630.1 H472 V628.8 H474 V629.8 H476 V626.6 H477 V624.9 H479 V629.9 H480 V629.8 H482 V626.7 H484 V628.8 H486 V626.1 H487 V628.4 H489 V628.6 H490 V630.2 H492 V628.9 H494 V628.8 H495 V629.4 H496 V629.8 H498 V628.4 H499 V629.6 H501 V623.8 H503 V628.8 H504 V630.0 H505 V628.1 H506 V626.5 H507 V627.7 H509 V628.1 H510 V628.9 H511 V630.4 H512 V627.9 H513 V629.2 H515 V630.2 H517 V630.0 H518 V628.0 H520 V628.9 H521 V622.7 H522 V622.4 H524 V628.0 H526 V628.0 H528 V629.3 H530 V628.9 H532 V629.9 H534 V625.3 H536 V629.5 H538 V627.6 H539 V630.4 H540 V627.7 H542 V621.0 H543 V628.9 H545 V627.8 H546 V627.9 H547 V628.6 H549 V624.9 H550 V625.4 H551 V629.0 H552 V627.9 H553 V629.0 H554 V629.0 H556 V626.7 H557 V629.3 H559 V627.7 H560 V626.7 H561 V628.5 H563 V627.7 H564 V627.3 H565 V629.4 H567 V628.3 H569 V626.0 H571 V629.4 H573 V629.8 H574 V625.8 H575 V629.9 H576 V625.5 H577 V628.7 H579 V624.2 H581 V629.5 H582 V629.3 H584 V630.0 H585 V630.2 H586 V627.5 H588 V621.0 H590 V630.3 H591 V624.1 H592 V629.4 H593 V628.9 H594 V630.0 H596 V629.5 H598 V628.1 H599 V625.1 H600 V628.8 H602 V627.6 H604 V630.2 H606 V630.0 H607 V628.1 H609 V630.1 H610 V625.1 H611 V628.3 H612 V628.9 H613 V629.2 H614 V625.4 H615 V629.9 H617 V630.2 H618 V628.1 H619 V630.3 H620 V627.8 H622 V623.6 H623 V629.9 H624 V629.6 H625 V627.6 H626 V627.9 H628 V626.4 H629 V629.5 H630 V630.0 H631 V627.4 H633 V627.9 H634 V628.2 H635 V625.5 H636 V624.4 H637 V624.8 H638 V628.2 H639 V626.6 H641 V627.9 H643 V626.2 H644 V630.4 H645 V628.8 H646 V630.4 H647 V625.9 H648 V622.9 H649 V627.6 H651 V623.7 H653 V627.6 H654 V629.7 H655 V629.0 H656 V626.3 H658 V628.5 H659 V629.5 H661 V627.6 H662 V629.3 H663 V628.1 H665 V629.8 H666 V628.4 H667 V628.0 H668 V628.0 H669 V629.3 H670 V625.0 H672 V629.1 H673 V629.0 H675 V629.8 H677 V621.5 H679 V630.3 H680 V627.7 H681 V627.8 H682 V628.9 H683 V620.0 H684 V628.9 H685 V625.8 H686 V628.6 H687 V629.5 H688 V629.1 H690 V629.4 H691 V628.9 H693 V627.9 H694 V629.2 H695 V625.5 H696 V629.0 H697 V627.9 H699 V622.4 H700 V627.0 H701 V629.7 H702 V628.6 H704 V630.1 H705 V628.6 H706 V628.3 H707 V626.7 H708 V628.1 H710 V625.5 H712 V629.4 H714 V626.1 H715 V628.9 H717 V630.2 H718 V628.4 H720 V624.8 H722 V628.5 H723 V628.9 H725 V628.8 H726 V633 Z" fill="#12a012"/><rect x="11.500" y="275.500" width="715" height="287" fill="none" stroke="#111" stroke-width="1"/><rect x="11.500" y="565.500" width="715" height="68" fill="none" stroke="#111" stroke-width="1"/><path d="M727 305.5 H729" stroke="#111" stroke-width="1"/><path d="M727 337.5 H729" stroke="#111" stroke-width="1"/><path d="M727 369.5 H729" stroke="#111" stroke-width="1"/><path d="M727 401.5 H729" stroke="#111" stroke-width="1"/><path d="M727 433.5 H729" stroke="#111" stroke-width="1"/><path d="M727 465.5 H729" stroke="#111" stroke-width="1"/><path d="M727 497.5 H729" stroke="#111" stroke-width="1"/><path d="M727 529.5 H729" stroke="#111" stroke-width="1"/><path d="M727 561.5 H729" stroke="#111" stroke-width="1"/></svg>
<div class="t" style="left:731px;top:302px;font-size:10px;color:#111;letter-spacing:-0.35px;">29155</div>
<div class="t" style="left:731px;top:334px;font-size:10px;color:#111;letter-spacing:-0.35px;">26572</div>
<div class="t" style="left:731px;top:366px;font-size:10px;color:#111;letter-spacing:-0.35px;">23990</div>
<div class="t" style="left:731px;top:398px;font-size:10px;color:#111;letter-spacing:-0.35px;">21408</div>
<div class="t" style="left:731px;top:430px;font-size:10px;color:#111;letter-spacing:-0.35px;">18826</div>
<div class="t" style="left:731px;top:462px;font-size:10px;color:#111;letter-spacing:-0.35px;">16244</div>
<div class="t" style="left:731px;top:494px;font-size:10px;color:#111;letter-spacing:-0.35px;">13662</div>
<div class="t" style="left:731px;top:526px;font-size:10px;color:#111;letter-spacing:-0.35px;">11080</div>
<div class="t" style="left:731px;top:558px;font-size:10px;color:#111;letter-spacing:-0.35px;">8498</div>
<div class="t" style="left:731px;top:566px;font-size:10px;color:#111;letter-spacing:-0.35px;background:#fff;">25.0%</div>
<div class="t" style="left:731px;top:629px;font-size:10px;color:#111;letter-spacing:-0.35px;">0.0%</div>
<div class="t" style="left:16px;top:280px;font-size:9px;color:#0a0a9c;">结余 <span style="color:#333">/</span> <span style="color:#12a012">净值</span></div>
<div class="t" style="left:15px;top:568px;font-size:9px;color:#222;">入金加载</div>
<div class="t" style="left:13px;top:636px;font-size:10px;color:#111;letter-spacing:-0.4px;">2020.02.11</div>
<div class="t" style="left:77px;top:636px;font-size:10px;color:#111;letter-spacing:-0.4px;">2020.03.09</div>
<div class="t" style="left:141px;top:636px;font-size:10px;color:#111;letter-spacing:-0.4px;">2020.03.12</div>
<div class="t" style="left:205px;top:636px;font-size:10px;color:#111;letter-spacing:-0.4px;">2020.03.18</div>
<div class="t" style="left:269px;top:636px;font-size:10px;color:#111;letter-spacing:-0.4px;">2020.03.23</div>
<div class="t" style="left:333px;top:636px;font-size:10px;color:#111;letter-spacing:-0.4px;">2020.04.03</div>
<div class="t" style="left:397px;top:636px;font-size:10px;color:#111;letter-spacing:-0.4px;">2020.04.16</div>
<div class="t" style="left:461px;top:636px;font-size:10px;color:#111;letter-spacing:-0.4px;">2020.05.29</div>
<div class="t" style="left:525px;top:636px;font-size:10px;color:#111;letter-spacing:-0.4px;">2020.08.03</div>
<div class="t" style="left:589px;top:636px;font-size:10px;color:#111;letter-spacing:-0.4px;">2020.11.20</div>
<div class="t" style="left:653px;top:636px;font-size:10px;color:#111;letter-spacing:-0.4px;">2021.03.10</div>
<div class="t" style="left:717px;top:636px;font-size:10px;color:#111;letter-spacing:-0.4px;">2021.05.19</div>
<div class="a" style="left:9px;top:650px;width:757px;height:1px;background:#555;"></div>
<div class="a" style="left:210px;top:650px;width:43px;height:23px;background:#fff;border:1px solid #222;border-top:none;box-sizing:border-box;box-shadow:1px 1px 0 #666;"></div>
<div class="t" style="left:19px;top:655px;font-size:12.3px;color:#8a8a8a;">概览</div>
<div class="t" style="left:63px;top:655px;font-size:12.3px;color:#8a8a8a;">设置</div>
<div class="t" style="left:107px;top:655px;font-size:12.3px;color:#8a8a8a;">输入</div>
<div class="t" style="left:151px;top:655px;font-size:12.3px;color:#8a8a8a;">后台测试</div>
<div class="t" style="left:219px;top:655px;font-size:12.3px;color:#111;">图表</div>
<div class="t" style="left:263px;top:655px;font-size:12.3px;color:#8a8a8a;">代理</div>
<div class="t" style="left:307px;top:655px;font-size:12.3px;color:#8a8a8a;">日志</div>
<div class="a" style="left:53px;top:655px;width:1px;height:14px;background:#999;"></div>
<div class="a" style="left:97px;top:655px;width:1px;height:14px;background:#999;"></div>
<div class="a" style="left:141px;top:655px;width:1px;height:14px;background:#999;"></div>
<div class="a" style="left:297px;top:655px;width:1px;height:14px;background:#999;"></div>
<div class="t" style="left:576px;top:655px;font-size:13px;color:#222;">00:24:41 / 00:24:42</div>
<div class="a" style="left:696px;top:653px;width:70px;height:19px;background:#8fc152;"></div>
<div class="t" style="left:720px;top:656px;font-size:13px;color:#111;">开始</div>
<div class="a" style="left:0;top:677px;width:766px;height:1px;background:#c4c4c4;"></div>
<div class="a" style="left:0;top:678px;width:766px;height:18px;background:#f0f0f0;"></div>
<div class="t" style="left:-8px;top:685px;font-size:12px;color:#111;">查看帮忙,请按 F1</div>
<div class="t" style="left:171px;top:685px;font-size:12.3px;color:#111;">Default</div>
<div class="a" style="left:165px;top:681px;width:1px;height:15px;background:#b5b5b5;"></div>
<div class="a" style="left:316px;top:681px;width:1px;height:15px;background:#b5b5b5;"></div>
<div class="a" style="left:429px;top:681px;width:1px;height:15px;background:#b5b5b5;"></div>
<div class="a" style="left:511px;top:681px;width:1px;height:15px;background:#b5b5b5;"></div>
<div class="a" style="left:592px;top:681px;width:1px;height:15px;background:#b5b5b5;"></div>
<div class="a" style="left:670px;top:681px;width:1px;height:15px;background:#b5b5b5;"></div>
<div class="a" style="left:750px;top:681px;width:1px;height:15px;background:#b5b5b5;"></div>
<div class="a" style="left:766px;top:0;width:600px;height:696px;background:#f0f0f0;"></div>
<div class="a" style="left:766px;top:0;width:600px;height:14px;background:linear-gradient(90deg,#c6d9ed 0,#bdd3ea 19%,#7fa3cf 22.500%,#4a7ab6 26%,#4676b2 100%);"></div>
<div class="a" style="left:766px;top:11px;width:600px;height:3px;background:linear-gradient(#5d86bb,#365f98);opacity:.55;"></div>
<div class="a" style="left:766px;top:0;width:1px;height:696px;background:#2b2f36;"></div>
<div class="a" style="left:767px;top:0;width:7px;height:696px;background:linear-gradient(90deg,#6f839c,#dfe9f4 35%,#e4edf6 55%,#b9d0ea);"></div>
<div class="a" style="left:773px;top:13px;width:593px;height:1px;background:#6d7f96;"></div>
<div class="a" style="left:773px;top:13px;width:1px;height:683px;background:#8d9db3;"></div>
<svg style="left:773px;top:-6px" width="18" height="16" viewBox="0 0 18 16"><circle cx="7" cy="8" r="6.500" fill="#4a8fdc" stroke="#2a5ea8" stroke-width="1"/><circle cx="13" cy="5" r="4" fill="#dfeaf6" stroke="#555" stroke-width="1.500"/><path d="M3 9 Q6 5 10 10" stroke="#fff" stroke-width="1.300" fill="none"/></svg>
<div class="t" style="left:795.6px;top:-6px;font-size:12.200px;color:#0a0a0a;text-shadow:0 0 4px #fff,0 0 7px #fff,0 0 9px #e8f0fa;">Strategy Tester Visualization</div>
<div class="t" style="left:954px;top:-6px;font-size:12.200px;color:#0a0a0a;text-shadow:0 0 4px #fff,0 0 7px #fff,0 0 9px #e8f0fa;">:</div>
<div class="t" style="left:963.7px;top:-6px;font-size:12.200px;color:#0a0a0a;text-shadow:0 0 4px #fff,0 0 7px #fff,0 0 9px #e8f0fa;">П.EA</div>
<div class="t" style="left:998px;top:-6px;font-size:12.200px;color:#0a0a0a;text-shadow:0 0 4px #fff,0 0 7px #fff,0 0 9px #e8f0fa;font-size:12.500px;">布美原油套利3.1</div>
<div class="t" style="left:1092px;top:-6px;font-size:12.200px;color:#0a0a0a;text-shadow:0 0 4px #fff,0 0 7px #fff,0 0 9px #e8f0fa;">VX</div>
<div class="t" style="left:1106px;top:-6px;font-size:12.200px;color:#0a0a0a;text-shadow:0 0 4px #fff,0 0 7px #fff,0 0 9px #e8f0fa;">：</div>
<div class="t" style="left:1121px;top:-6px;font-size:12.200px;color:#0a0a0a;text-shadow:0 0 4px #fff,0 0 7px #fff,0 0 9px #e8f0fa;letter-spacing:1.100px;">My05613828</div>
<div class="t" style="left:1204.6px;top:-6px;font-size:12.200px;color:#0a0a0a;text-shadow:0 0 4px #fff,0 0 7px #fff,0 0 9px #e8f0fa;">on</div>
<div class="t" style="left:1222px;top:-6px;font-size:12.200px;color:#0a0a0a;text-shadow:0 0 4px #fff,0 0 7px #fff,0 0 9px #e8f0fa;letter-spacing:-0.700px;">XAUUSD,M1</div>
<div class="t" style="left:1289.6px;top:-6px;font-size:12.200px;color:#0a0a0a;text-shadow:0 0 4px #fff,0 0 7px #fff,0 0 9px #e8f0fa;">from</div>
<div class="t" style="left:1321.7px;top:-6px;font-size:12.200px;color:#0a0a0a;text-shadow:0 0 4px #fff,0 0 7px #fff,0 0 9px #e8f0fa;letter-spacing:1px;">2020.02.11</div>
<div class="a" style="left:774px;top:14px;width:592px;height:21px;background:#f5f6f7;"></div>
<div class="a" style="left:774px;top:35px;width:592px;height:1px;background:#dadada;"></div>
<div class="t" style="left:785px;top:19px;font-size:12.3px;color:#111;">文件(<u>F</u>)</div>
<div class="t" style="left:845px;top:19px;font-size:12.3px;color:#111;">显示(<u>V</u>)</div>
<div class="t" style="left:907px;top:19px;font-size:12.3px;color:#111;">图表(<u>C</u>)</div>
<div class="t" style="left:969px;top:19px;font-size:12.3px;color:#111;">测试</div>
<div class="t" style="left:1015px;top:19px;font-size:12.3px;color:#111;">帮助(<u>H</u>)</div>
<svg style="left:778px;top:41px" width="21" height="21" viewBox="0 0 21 21"><path d="M2.500 20 V3 M0 17.500 H19" stroke="#2f6fc0" stroke-width="1.200"/><path d="M2.500 0.500 L0.500 4 H4.500 Z M20.500 17.500 L17 15.500 V19.500 Z" fill="#2f6fc0"/><path d="M8 5 V15 M5.500 12 H8 M8 7 H10.500 M14.500 3 V13 M12 5.500 H14.500 M14.500 10.500 H17" stroke="#58a51c" stroke-width="2" fill="none"/></svg>
<div class="btnon" style="left:807px;top:39px;width:30px;height:25px;"></div>
<svg style="left:812px;top:41px" width="21" height="21" viewBox="0 0 21 21"><path d="M2.500 20 V3 M0 17.500 H19" stroke="#2f6fc0" stroke-width="1.200"/><path d="M2.500 0.500 L0.500 4 H4.500 Z M20.500 17.500 L17 15.500 V19.500 Z" fill="#2f6fc0"/><path d="M8.500 2 V16 M15.500 4 V14" stroke="#58a51c" stroke-width="1.200"/><rect x="6.500" y="4.500" width="4" height="9" fill="#e6f4d8" stroke="#58a51c" stroke-width="1.200"/><rect x="13.500" y="6.500" width="4" height="5.500" fill="#e6f4d8" stroke="#58a51c" stroke-width="1.200"/></svg>
<svg style="left:843px;top:41px" width="21" height="21" viewBox="0 0 21 21"><path d="M2.500 20 V3 M0 17.500 H19" stroke="#2f6fc0" stroke-width="1.200"/><path d="M2.500 0.500 L0.500 4 H4.500 Z M20.500 17.500 L17 15.500 V19.500 Z" fill="#2f6fc0"/><path d="M4.500 10 L8 13.500 L13 7 L18 12" stroke="#58a51c" stroke-width="2.200" fill="none"/></svg>
<div class="sep" style="left:872px;top:39px;height:25px;"></div>
<svg style="left:883px;top:41px" width="16" height="21" viewBox="0 0 16 21"><path d="M10 11 L14.500 19" stroke="#2a60b0" stroke-width="3" stroke-linecap="round"/><circle cx="7" cy="7" r="5.700" fill="#eef5ff" stroke="#2f6fc0" stroke-width="1.500"/><path d="M4 7 H10" stroke="#2f6fc0" stroke-width="1.300"/><path d="M7 4 V10" stroke="#2f6fc0" stroke-width="1.300"/></svg>
<svg style="left:915px;top:41px" width="16" height="21" viewBox="0 0 16 21"><path d="M10 11 L14.500 19" stroke="#2a60b0" stroke-width="3" stroke-linecap="round"/><circle cx="7" cy="7" r="5.700" fill="#eef5ff" stroke="#2f6fc0" stroke-width="1.500"/><path d="M4 7 H10" stroke="#2f6fc0" stroke-width="1.300"/></svg>
<div class="sep" style="left:942px;top:39px;height:25px;"></div>
<svg style="left:950.5px;top:40px" width="21" height="21" viewBox="0 0 21 21"><defs><radialGradient id="rg961" cx="50%" cy="35%" r="65%"><stop offset="0" stop-color="#d9d9d9"/><stop offset="1" stop-color="#a0a0a0"/></radialGradient></defs><circle cx="10.500" cy="10.500" r="9.300" fill="url(#rg961)" stroke="#8a8a8a" stroke-width="1"/><rect x="6.500" y="5.500" width="3" height="10" fill="#ffffff"/><rect x="11.500" y="5.500" width="3" height="10" fill="#ffffff"/></svg>
<svg style="left:982.5px;top:40px" width="21" height="21" viewBox="0 0 21 21"><defs><radialGradient id="rg993" cx="50%" cy="35%" r="65%"><stop offset="0" stop-color="#d9d9d9"/><stop offset="1" stop-color="#a0a0a0"/></radialGradient></defs><circle cx="10.500" cy="10.500" r="9.300" fill="url(#rg993)" stroke="#8a8a8a" stroke-width="1"/><rect x="6" y="6" width="9" height="9" rx="1" fill="#ffffff"/></svg>
<svg style="left:1014.5px;top:40px" width="21" height="21" viewBox="0 0 21 21"><defs><radialGradient id="rg1025" cx="50%" cy="35%" r="65%"><stop offset="0" stop-color="#8fd75a"/><stop offset="1" stop-color="#3fa21a"/></radialGradient></defs><circle cx="10.500" cy="10.500" r="9.300" fill="url(#rg1025)" stroke="#2c7d10" stroke-width="1"/><path d="M10.500 5 V16 L4 10.500 Z M17 5 V16 L10.500 10.500 Z" fill="#ffffff"/></svg>
<div class="a" style="left:1049px;top:46px;width:77px;height:2px;background:#c9c9c9;border-bottom:1px solid #fff;"></div>
<svg style="left:1119px;top:41px" width="10" height="18" viewBox="0 0 10 18"><path d="M0.500 0.500 H9.500 V13 L5 17.500 L0.500 13 Z" fill="#e4e4e4" stroke="#8a8a8a" stroke-width="1"/></svg>
<svg style="left:1142.5px;top:40px" width="21" height="21" viewBox="0 0 21 21" opacity=".8"><defs><radialGradient id="rg1153" cx="50%" cy="35%" r="65%"><stop offset="0" stop-color="#d9d9d9"/><stop offset="1" stop-color="#a0a0a0"/></radialGradient></defs><circle cx="10.500" cy="10.500" r="9.300" fill="url(#rg1153)" stroke="#8a8a8a" stroke-width="1"/><path d="M4.500 5 V16 L11 10.500 Z M11 5 V16 L17.500 10.500 Z" fill="#ffffff"/></svg>
<svg style="left:1174.5px;top:40px" width="21" height="21" viewBox="0 0 21 21" opacity=".8"><defs><radialGradient id="rg1185" cx="50%" cy="35%" r="65%"><stop offset="0" stop-color="#d9d9d9"/><stop offset="1" stop-color="#a0a0a0"/></radialGradient></defs><circle cx="10.500" cy="10.500" r="9.300" fill="url(#rg1185)" stroke="#8a8a8a" stroke-width="1"/><path d="M5.500 5 V16 L12 10.500 Z" fill="#ffffff"/><rect x="12.500" y="5" width="3" height="11" fill="#ffffff"/></svg>
<div class="sep" style="left:1204px;top:39px;height:25px;background:#8c8c8c;"></div>
<svg style="left:1212.5px;top:40px" width="21" height="21" viewBox="0 0 21 21"><defs><radialGradient id="rg1223" cx="50%" cy="35%" r="65%"><stop offset="0" stop-color="#b9b9b9"/><stop offset="1" stop-color="#858585"/></radialGradient></defs><circle cx="10.500" cy="10.500" r="9.300" fill="url(#rg1223)" stroke="#7a7a7a" stroke-width="1"/><path d="M4 7 V14 M4 10.500 H7 M17 7 V14" stroke="#ffffff" stroke-width="1.600"/><path d="M8.500 10.500 H15" stroke="#ffffff" stroke-width="1.500" stroke-dasharray="1.500 1.500"/></svg>
<div class="t" style="left:1236px;top:45px;font-size:12px;color:#a9a9a9;">跳过</div>
<div class="a" style="left:1268px;top:41px;width:98px;height:23px;background:#fff;border:1px solid #d9d9d9;border-right:none;box-sizing:border-box;"></div>
<div class="t" style="left:1271px;top:46px;font-size:12.800px;color:#5e5e5e;">2021.08.28 00:00</div>
<div class="a" style="left:774px;top:66px;width:592px;height:4px;background:linear-gradient(#e6e6e6,#bdbdbd 50%,#6a6a6a);"></div>
<div class="a" style="left:775px;top:69px;width:591px;height:166px;background:#000;overflow:hidden;" id="rchart">
<svg style="left:0;top:0" width="591" height="166" viewBox="0 0 591 166"><path d="M35.5 3 V145" stroke="#a8a8a8" stroke-width="1" stroke-dasharray="3 3"/><path d="M67.5 3 V145" stroke="#a8a8a8" stroke-width="1" stroke-dasharray="3 3"/><path d="M99.5 3 V145" stroke="#a8a8a8" stroke-width="1" stroke-dasharray="3 3"/><path d="M131.5 3 V145" stroke="#a8a8a8" stroke-width="1" stroke-dasharray="3 3"/><path d="M163.5 3 V145" stroke="#a8a8a8" stroke-width="1" stroke-dasharray="3 3"/><path d="M195.5 3 V145" stroke="#a8a8a8" stroke-width="1" stroke-dasharray="3 3"/><path d="M227.5 3 V145" stroke="#a8a8a8" stroke-width="1" stroke-dasharray="3 3"/><path d="M259.5 3 V145" stroke="#a8a8a8" stroke-width="1" stroke-dasharray="3 3"/><path d="M291.5 3 V145" stroke="#a8a8a8" stroke-width="1" stroke-dasharray="3 3"/><path d="M323.5 3 V145" stroke="#a8a8a8" stroke-width="1" stroke-dasharray="3 3"/><path d="M355.5 3 V145" stroke="#a8a8a8" stroke-width="1" stroke-dasharray="3 3"/><path d="M387.5 3 V145" stroke="#a8a8a8" stroke-width="1" stroke-dasharray="3 3"/><path d="M419.5 3 V145" stroke="#a8a8a8" stroke-width="1" stroke-dasharray="3 3"/><path d="M451.5 3 V145" stroke="#a8a8a8" stroke-width="1" stroke-dasharray="3 3"/><path d="M483.5 3 V145" stroke="#a8a8a8" stroke-width="1" stroke-dasharray="3 3"/><path d="M515.5 3 V145" stroke="#a8a8a8" stroke-width="1" stroke-dasharray="3 3"/><path d="M547.5 3 V145" stroke="#a8a8a8" stroke-width="1" stroke-dasharray="3 3"/><path d="M579.5 3 V145" stroke="#a8a8a8" stroke-width="1" stroke-dasharray="3 3"/><path d="M4 18.5 H591" stroke="#a8a8a8" stroke-width="1" stroke-dasharray="3 3"/><path d="M4 50.5 H591" stroke="#a8a8a8" stroke-width="1" stroke-dasharray="3 3"/><path d="M4 82.5 H591" stroke="#a8a8a8" stroke-width="1" stroke-dasharray="3 3"/><path d="M4 114.5 H591" stroke="#a8a8a8" stroke-width="1" stroke-dasharray="3 3"/><path d="M4 106.5 H591" stroke="#9a9a9a" stroke-width="1"/><path d="M3.500 3 V145.500 H591" stroke="#e8e8e8" stroke-width="1" fill="none"/><path d="M3 3.500 H591" stroke="#e8e8e8" stroke-width="1"/><path d="M67.5 145 V149" stroke="#e8e8e8" stroke-width="1"/><path d="M131.5 145 V149" stroke="#e8e8e8" stroke-width="1"/><path d="M195.5 145 V149" stroke="#e8e8e8" stroke-width="1"/><path d="M259.5 145 V149" stroke="#e8e8e8" stroke-width="1"/><path d="M323.5 145 V149" stroke="#e8e8e8" stroke-width="1"/><path d="M387.5 145 V149" stroke="#e8e8e8" stroke-width="1"/><path d="M451.5 145 V149" stroke="#e8e8e8" stroke-width="1"/><path d="M515.5 145 V149" stroke="#e8e8e8" stroke-width="1"/><path d="M579.5 145 V149" stroke="#e8e8e8" stroke-width="1"/><path d="M643.5 145 V149" stroke="#e8e8e8" stroke-width="1"/><path d="M7.5 131.9 V135.5" stroke="#44e844" stroke-width="1"/><rect x="6.5" y="133.2" width="2" height="1.0" fill="#000" stroke="#44e844" stroke-width="1"/><path d="M11.5 132.0 V134.9" stroke="#44e844" stroke-width="1"/><rect x="10.5" y="133.2" width="2" height="1.0" fill="#c8ffc8" stroke="#44e844" stroke-width="1"/><path d="M15.5 132.5 V135.0" stroke="#44e844" stroke-width="1"/><rect x="14.5" y="133.6" width="2" height="1.0" fill="#c8ffc8" stroke="#44e844" stroke-width="1"/><path d="M19.5 133.4 V136.4" stroke="#44e844" stroke-width="1"/><rect x="18.5" y="133.6" width="2" height="2.1" fill="#c8ffc8" stroke="#44e844" stroke-width="1"/><path d="M23.5 133.5 V137.2" stroke="#44e844" stroke-width="1"/><rect x="22.5" y="135.3" width="2" height="1.0" fill="#000" stroke="#44e844" stroke-width="1"/><path d="M27.5 120.1 V137.4" stroke="#44e844" stroke-width="1"/><rect x="26.5" y="122.2" width="2" height="13.1" fill="#000" stroke="#44e844" stroke-width="1"/><path d="M31.5 108.5 V122.6" stroke="#44e844" stroke-width="1"/><rect x="30.5" y="109.8" width="2" height="12.4" fill="#000" stroke="#44e844" stroke-width="1"/><path d="M35.5 108.7 V110.1" stroke="#44e844" stroke-width="1"/><rect x="34.5" y="109.8" width="2" height="1.0" fill="#c8ffc8" stroke="#44e844" stroke-width="1"/><path d="M39.5 109.5 V111.0" stroke="#44e844" stroke-width="1"/><rect x="38.5" y="110.0" width="2" height="1.0" fill="#c8ffc8" stroke="#44e844" stroke-width="1"/><path d="M43.5 107.5 V112.7" stroke="#44e844" stroke-width="1"/><rect x="42.5" y="108.5" width="2" height="2.4" fill="#000" stroke="#44e844" stroke-width="1"/><path d="M47.5 104.4 V109.6" stroke="#44e844" stroke-width="1"/><rect x="46.5" y="105.8" width="2" height="2.7" fill="#000" stroke="#44e844" stroke-width="1"/><path d="M51.5 104.1 V106.4" stroke="#44e844" stroke-width="1"/><rect x="50.5" y="105.1" width="2" height="1.0" fill="#000" stroke="#44e844" stroke-width="1"/><path d="M55.5 102.6 V107.0" stroke="#44e844" stroke-width="1"/><rect x="54.5" y="104.8" width="2" height="1.0" fill="#000" stroke="#44e844" stroke-width="1"/><path d="M59.5 103.2 V105.3" stroke="#44e844" stroke-width="1"/><rect x="58.5" y="103.9" width="2" height="1.0" fill="#000" stroke="#44e844" stroke-width="1"/><path d="M63.5 102.6 V105.6" stroke="#44e844" stroke-width="1"/><rect x="62.5" y="102.8" width="2" height="1.1" fill="#000" stroke="#44e844" stroke-width="1"/><path d="M67.5 100.7 V103.6" stroke="#44e844" stroke-width="1"/><rect x="66.5" y="102.6" width="2" height="1.0" fill="#000" stroke="#44e844" stroke-width="1"/><path d="M71.5 100.7 V105.3" stroke="#44e844" stroke-width="1"/><rect x="70.5" y="102.6" width="2" height="2.7" fill="#c8ffc8" stroke="#44e844" stroke-width="1"/><path d="M75.5 103.3 V107.3" stroke="#44e844" stroke-width="1"/><rect x="74.5" y="105.3" width="2" height="1.0" fill="#c8ffc8" stroke="#44e844" stroke-width="1"/><path d="M79.5 105.4 V109.9" stroke="#44e844" stroke-width="1"/><rect x="78.5" y="106.3" width="2" height="3.5" fill="#c8ffc8" stroke="#44e844" stroke-width="1"/><path d="M83.5 108.1 V113.2" stroke="#44e844" stroke-width="1"/><rect x="82.5" y="109.8" width="2" height="2.8" fill="#c8ffc8" stroke="#44e844" stroke-width="1"/><path d="M87.5 111.9 V129.7" stroke="#44e844" stroke-width="1"/><rect x="86.5" y="112.6" width="2" height="14.9" fill="#c8ffc8" stroke="#44e844" stroke-width="1"/><path d="M91.5 120.5 V128.1" stroke="#44e844" stroke-width="1"/><rect x="90.5" y="120.8" width="2" height="6.7" fill="#000" stroke="#44e844" stroke-width="1"/><path d="M95.5 120.7 V123.1" stroke="#44e844" stroke-width="1"/><rect x="94.5" y="120.8" width="2" height="1.0" fill="#c8ffc8" stroke="#44e844" stroke-width="1"/><path d="M99.5 120.1 V122.5" stroke="#44e844" stroke-width="1"/><rect x="98.5" y="121.3" width="2" height="1.0" fill="#c8ffc8" stroke="#44e844" stroke-width="1"/><path d="M103.5 119.9 V121.9" stroke="#44e844" stroke-width="1"/><rect x="102.5" y="121.5" width="2" height="1.0" fill="#c8ffc8" stroke="#44e844" stroke-width="1"/><path d="M107.5 121.4 V123.3" stroke="#44e844" stroke-width="1"/><rect x="106.5" y="121.6" width="2" height="1.0" fill="#c8ffc8" stroke="#44e844" stroke-width="1"/><path d="M111.5 121.2 V124.5" stroke="#44e844" stroke-width="1"/><rect x="110.5" y="121.8" width="2" height="1.0" fill="#000" stroke="#44e844" stroke-width="1"/><path d="M115.5 121.1 V124.7" stroke="#44e844" stroke-width="1"/><rect x="114.5" y="121.8" width="2" height="1.0" fill="#c8ffc8" stroke="#44e844" stroke-width="1"/><path d="M119.5 121.9 V130.4" stroke="#44e844" stroke-width="1"/><rect x="118.5" y="122.8" width="2" height="5.8" fill="#c8ffc8" stroke="#44e844" stroke-width="1"/><path d="M123.5 126.7 V130.7" stroke="#44e844" stroke-width="1"/><rect x="122.5" y="126.9" width="2" height="1.7" fill="#000" stroke="#44e844" stroke-width="1"/><path d="M127.5 123.0 V128.6" stroke="#44e844" stroke-width="1"/><rect x="126.5" y="123.6" width="2" height="3.3" fill="#000" stroke="#44e844" stroke-width="1"/><path d="M131.5 122.9 V124.0" stroke="#44e844" stroke-width="1"/><rect x="130.5" y="123.6" width="2" height="1.0" fill="#c8ffc8" stroke="#44e844" stroke-width="1"/><path d="M135.5 122.4 V124.4" stroke="#44e844" stroke-width="1"/><rect x="134.5" y="123.7" width="2" height="1.0" fill="#000" stroke="#44e844" stroke-width="1"/><path d="M139.5 122.9 V125.7" stroke="#44e844" stroke-width="1"/><rect x="138.5" y="123.7" width="2" height="1.0" fill="#c8ffc8" stroke="#44e844" stroke-width="1"/><path d="M143.5 123.7 V126.8" stroke="#44e844" stroke-width="1"/><rect x="142.5" y="124.7" width="2" height="1.0" fill="#c8ffc8" stroke="#44e844" stroke-width="1"/><path d="M147.5 116.4 V125.9" stroke="#44e844" stroke-width="1"/><rect x="146.5" y="116.8" width="2" height="8.7" fill="#000" stroke="#44e844" stroke-width="1"/><path d="M151.5 108.8 V117.4" stroke="#44e844" stroke-width="1"/><rect x="150.5" y="110.6" width="2" height="6.3" fill="#000" stroke="#44e844" stroke-width="1"/><path d="M155.5 108.6 V112.6" stroke="#44e844" stroke-width="1"/><rect x="154.5" y="110.2" width="2" height="1.0" fill="#000" stroke="#44e844" stroke-width="1"/><path d="M159.5 108.1 V113.4" stroke="#44e844" stroke-width="1"/><rect x="158.5" y="110.2" width="2" height="1.2" fill="#c8ffc8" stroke="#44e844" stroke-width="1"/><path d="M163.5 103.2 V111.7" stroke="#44e844" stroke-width="1"/><rect x="162.5" y="104.1" width="2" height="7.3" fill="#000" stroke="#44e844" stroke-width="1"/><path d="M167.5 100.1 V104.6" stroke="#44e844" stroke-width="1"/><rect x="166.5" y="102.2" width="2" height="1.9" fill="#000" stroke="#44e844" stroke-width="1"/><path d="M171.5 101.1 V104.0" stroke="#44e844" stroke-width="1"/><rect x="170.5" y="101.7" width="2" height="1.0" fill="#000" stroke="#44e844" stroke-width="1"/><path d="M175.5 98.5 V102.1" stroke="#44e844" stroke-width="1"/><rect x="174.5" y="99.2" width="2" height="2.5" fill="#000" stroke="#44e844" stroke-width="1"/><path d="M179.5 99.0 V99.9" stroke="#44e844" stroke-width="1"/><rect x="178.5" y="99.2" width="2" height="1.0" fill="#c8ffc8" stroke="#44e844" stroke-width="1"/><path d="M183.5 97.2 V100.7" stroke="#44e844" stroke-width="1"/><rect x="182.5" y="99.1" width="2" height="1.0" fill="#000" stroke="#44e844" stroke-width="1"/><path d="M187.5 96.6 V99.5" stroke="#44e844" stroke-width="1"/><rect x="186.5" y="98.6" width="2" height="1.0" fill="#000" stroke="#44e844" stroke-width="1"/><path d="M191.5 95.3 V99.6" stroke="#44e844" stroke-width="1"/><rect x="190.5" y="95.9" width="2" height="2.8" fill="#000" stroke="#44e844" stroke-width="1"/><path d="M195.5 93.5 V96.7" stroke="#44e844" stroke-width="1"/><rect x="194.5" y="93.9" width="2" height="2.0" fill="#000" stroke="#44e844" stroke-width="1"/><path d="M199.5 92.4 V94.7" stroke="#44e844" stroke-width="1"/><rect x="198.5" y="92.7" width="2" height="1.2" fill="#000" stroke="#44e844" stroke-width="1"/><path d="M203.5 87.2 V94.1" stroke="#44e844" stroke-width="1"/><rect x="202.5" y="89.3" width="2" height="3.3" fill="#000" stroke="#44e844" stroke-width="1"/><path d="M207.5 87.5 V89.6" stroke="#44e844" stroke-width="1"/><rect x="206.5" y="88.8" width="2" height="1.0" fill="#000" stroke="#44e844" stroke-width="1"/><path d="M211.5 87.7 V90.8" stroke="#44e844" stroke-width="1"/><rect x="210.5" y="87.8" width="2" height="1.0" fill="#000" stroke="#44e844" stroke-width="1"/><path d="M215.5 85.6 V90.3" stroke="#44e844" stroke-width="1"/><rect x="214.5" y="87.8" width="2" height="2.5" fill="#c8ffc8" stroke="#44e844" stroke-width="1"/><path d="M219.5 87.8 V91.9" stroke="#44e844" stroke-width="1"/><rect x="218.5" y="88.8" width="2" height="1.4" fill="#000" stroke="#44e844" stroke-width="1"/><path d="M223.5 82.3 V89.0" stroke="#44e844" stroke-width="1"/><rect x="222.5" y="84.5" width="2" height="4.3" fill="#000" stroke="#44e844" stroke-width="1"/><path d="M227.5 82.9 V86.6" stroke="#44e844" stroke-width="1"/><rect x="226.5" y="84.5" width="2" height="1.0" fill="#c8ffc8" stroke="#44e844" stroke-width="1"/><path d="M231.5 83.0 V91.6" stroke="#44e844" stroke-width="1"/><rect x="230.5" y="84.6" width="2" height="5.3" fill="#c8ffc8" stroke="#44e844" stroke-width="1"/><path d="M235.5 89.1 V93.3" stroke="#44e844" stroke-width="1"/><rect x="234.5" y="89.9" width="2" height="1.9" fill="#c8ffc8" stroke="#44e844" stroke-width="1"/><path d="M239.5 89.8 V94.1" stroke="#44e844" stroke-width="1"/><rect x="238.5" y="91.8" width="2" height="1.4" fill="#c8ffc8" stroke="#44e844" stroke-width="1"/><path d="M243.5 91.1 V94.4" stroke="#44e844" stroke-width="1"/><rect x="242.5" y="93.0" width="2" height="1.0" fill="#000" stroke="#44e844" stroke-width="1"/><path d="M247.5 88.4 V94.2" stroke="#44e844" stroke-width="1"/><rect x="246.5" y="89.2" width="2" height="3.8" fill="#000" stroke="#44e844" stroke-width="1"/><path d="M251.5 89.0 V90.8" stroke="#44e844" stroke-width="1"/><rect x="250.5" y="89.2" width="2" height="1.0" fill="#c8ffc8" stroke="#44e844" stroke-width="1"/><path d="M255.5 87.4 V93.8" stroke="#44e844" stroke-width="1"/><rect x="254.5" y="89.4" width="2" height="2.8" fill="#c8ffc8" stroke="#44e844" stroke-width="1"/><path d="M259.5 88.4 V93.5" stroke="#44e844" stroke-width="1"/><rect x="258.5" y="90.0" width="2" height="2.2" fill="#000" stroke="#44e844" stroke-width="1"/><path d="M263.5 88.2 V92.3" stroke="#44e844" stroke-width="1"/><rect x="262.5" y="90.0" width="2" height="2.1" fill="#c8ffc8" stroke="#44e844" stroke-width="1"/><path d="M267.5 89.2 V93.4" stroke="#44e844" stroke-width="1"/><rect x="266.5" y="89.3" width="2" height="2.8" fill="#000" stroke="#44e844" stroke-width="1"/><path d="M271.5 80.6 V90.8" stroke="#44e844" stroke-width="1"/><rect x="270.5" y="81.1" width="2" height="8.2" fill="#000" stroke="#44e844" stroke-width="1"/><path d="M275.5 76.5 V83.1" stroke="#44e844" stroke-width="1"/><rect x="274.5" y="77.8" width="2" height="3.3" fill="#000" stroke="#44e844" stroke-width="1"/><path d="M279.5 74.5 V78.5" stroke="#44e844" stroke-width="1"/><rect x="278.5" y="74.5" width="2" height="3.3" fill="#000" stroke="#44e844" stroke-width="1"/><path d="M283.5 74.1 V77.8" stroke="#44e844" stroke-width="1"/><rect x="282.5" y="74.5" width="2" height="2.9" fill="#c8ffc8" stroke="#44e844" stroke-width="1"/><path d="M287.5 75.6 V78.4" stroke="#44e844" stroke-width="1"/><rect x="286.5" y="77.0" width="2" height="1.0" fill="#000" stroke="#44e844" stroke-width="1"/><path d="M291.5 75.9 V78.5" stroke="#44e844" stroke-width="1"/><rect x="290.5" y="76.6" width="2" height="1.0" fill="#000" stroke="#44e844" stroke-width="1"/><path d="M295.5 74.2 V78.4" stroke="#44e844" stroke-width="1"/><rect x="294.5" y="75.1" width="2" height="1.5" fill="#000" stroke="#44e844" stroke-width="1"/><path d="M299.5 73.2 V78.3" stroke="#44e844" stroke-width="1"/><rect x="298.5" y="75.1" width="2" height="2.3" fill="#c8ffc8" stroke="#44e844" stroke-width="1"/><path d="M303.5 76.8 V78.4" stroke="#44e844" stroke-width="1"/><rect x="302.5" y="77.5" width="2" height="1.0" fill="#c8ffc8" stroke="#44e844" stroke-width="1"/><path d="M307.5 75.4 V80.0" stroke="#44e844" stroke-width="1"/><rect x="306.5" y="77.2" width="2" height="1.0" fill="#000" stroke="#44e844" stroke-width="1"/><path d="M311.5 74.7 V77.8" stroke="#44e844" stroke-width="1"/><rect x="310.5" y="76.8" width="2" height="1.0" fill="#000" stroke="#44e844" stroke-width="1"/><path d="M315.5 73.3 V77.4" stroke="#44e844" stroke-width="1"/><rect x="314.5" y="74.3" width="2" height="2.4" fill="#000" stroke="#44e844" stroke-width="1"/><path d="M319.5 73.4 V76.1" stroke="#44e844" stroke-width="1"/><rect x="318.5" y="74.3" width="2" height="1.0" fill="#c8ffc8" stroke="#44e844" stroke-width="1"/><path d="M323.5 74.0 V77.4" stroke="#44e844" stroke-width="1"/><rect x="322.5" y="74.7" width="2" height="1.0" fill="#c8ffc8" stroke="#44e844" stroke-width="1"/><path d="M327.5 74.6 V78.1" stroke="#44e844" stroke-width="1"/><rect x="326.5" y="75.6" width="2" height="2.3" fill="#c8ffc8" stroke="#44e844" stroke-width="1"/><path d="M331.5 76.0 V79.7" stroke="#44e844" stroke-width="1"/><rect x="330.5" y="77.9" width="2" height="1.7" fill="#c8ffc8" stroke="#44e844" stroke-width="1"/><path d="M335.5 78.3 V86.1" stroke="#44e844" stroke-width="1"/><rect x="334.5" y="79.6" width="2" height="5.8" fill="#c8ffc8" stroke="#44e844" stroke-width="1"/><path d="M339.5 81.2 V85.7" stroke="#44e844" stroke-width="1"/><rect x="338.5" y="81.2" width="2" height="4.2" fill="#000" stroke="#44e844" stroke-width="1"/><path d="M343.5 78.1 V83.0" stroke="#44e844" stroke-width="1"/><rect x="342.5" y="78.1" width="2" height="3.1" fill="#000" stroke="#44e844" stroke-width="1"/><path d="M347.5 74.3 V78.2" stroke="#44e844" stroke-width="1"/><rect x="346.5" y="74.6" width="2" height="3.5" fill="#000" stroke="#44e844" stroke-width="1"/><path d="M351.5 73.6 V80.1" stroke="#44e844" stroke-width="1"/><rect x="350.5" y="74.6" width="2" height="4.1" fill="#c8ffc8" stroke="#44e844" stroke-width="1"/><path d="M355.5 76.9 V82.7" stroke="#44e844" stroke-width="1"/><rect x="354.5" y="78.7" width="2" height="1.9" fill="#c8ffc8" stroke="#44e844" stroke-width="1"/><path d="M359.5 80.1 V82.9" stroke="#44e844" stroke-width="1"/><rect x="358.5" y="80.6" width="2" height="1.3" fill="#c8ffc8" stroke="#44e844" stroke-width="1"/><path d="M363.5 81.9 V83.3" stroke="#44e844" stroke-width="1"/><rect x="362.5" y="81.9" width="2" height="1.0" fill="#c8ffc8" stroke="#44e844" stroke-width="1"/><path d="M367.5 79.2 V82.9" stroke="#44e844" stroke-width="1"/><rect x="366.5" y="79.6" width="2" height="2.7" fill="#000" stroke="#44e844" stroke-width="1"/><path d="M371.5 75.2 V80.7" stroke="#44e844" stroke-width="1"/><rect x="370.5" y="76.7" width="2" height="2.8" fill="#000" stroke="#44e844" stroke-width="1"/><path d="M375.5 73.5 V77.6" stroke="#44e844" stroke-width="1"/><rect x="374.5" y="75.1" width="2" height="1.6" fill="#000" stroke="#44e844" stroke-width="1"/><path d="M379.5 72.9 V75.3" stroke="#44e844" stroke-width="1"/><rect x="378.5" y="74.9" width="2" height="1.0" fill="#000" stroke="#44e844" stroke-width="1"/><path d="M383.5 73.0 V75.1" stroke="#44e844" stroke-width="1"/><rect x="382.5" y="74.6" width="2" height="1.0" fill="#000" stroke="#44e844" stroke-width="1"/><path d="M387.5 71.2 V76.6" stroke="#44e844" stroke-width="1"/><rect x="386.5" y="72.6" width="2" height="2.0" fill="#000" stroke="#44e844" stroke-width="1"/><path d="M391.5 67.7 V74.6" stroke="#44e844" stroke-width="1"/><rect x="390.5" y="68.9" width="2" height="3.7" fill="#000" stroke="#44e844" stroke-width="1"/><path d="M395.5 66.7 V69.9" stroke="#44e844" stroke-width="1"/><rect x="394.5" y="68.8" width="2" height="1.0" fill="#000" stroke="#44e844" stroke-width="1"/><path d="M399.5 67.7 V70.4" stroke="#44e844" stroke-width="1"/><rect x="398.5" y="68.2" width="2" height="1.0" fill="#000" stroke="#44e844" stroke-width="1"/><path d="M403.5 66.8 V69.8" stroke="#44e844" stroke-width="1"/><rect x="402.5" y="68.2" width="2" height="1.0" fill="#c8ffc8" stroke="#44e844" stroke-width="1"/><path d="M407.5 66.1 V70.4" stroke="#44e844" stroke-width="1"/><rect x="406.5" y="68.0" width="2" height="1.0" fill="#000" stroke="#44e844" stroke-width="1"/><path d="M411.5 66.9 V71.7" stroke="#44e844" stroke-width="1"/><rect x="410.5" y="68.0" width="2" height="1.9" fill="#c8ffc8" stroke="#44e844" stroke-width="1"/><path d="M415.5 66.5 V71.8" stroke="#44e844" stroke-width="1"/><rect x="414.5" y="68.5" width="2" height="1.4" fill="#000" stroke="#44e844" stroke-width="1"/><path d="M419.5 68.0 V69.4" stroke="#44e844" stroke-width="1"/><rect x="418.5" y="68.2" width="2" height="1.0" fill="#000" stroke="#44e844" stroke-width="1"/><path d="M423.5 66.5 V70.8" stroke="#44e844" stroke-width="1"/><rect x="422.5" y="68.2" width="2" height="1.5" fill="#c8ffc8" stroke="#44e844" stroke-width="1"/><path d="M427.5 67.9 V70.2" stroke="#44e844" stroke-width="1"/><rect x="426.5" y="69.7" width="2" height="1.0" fill="#c8ffc8" stroke="#44e844" stroke-width="1"/><path d="M431.5 69.7 V72.8" stroke="#44e844" stroke-width="1"/><rect x="430.5" y="70.1" width="2" height="2.0" fill="#c8ffc8" stroke="#44e844" stroke-width="1"/><path d="M435.5 71.0 V72.4" stroke="#44e844" stroke-width="1"/><rect x="434.5" y="71.3" width="2" height="1.0" fill="#000" stroke="#44e844" stroke-width="1"/><path d="M439.5 69.7 V73.5" stroke="#44e844" stroke-width="1"/><rect x="438.5" y="71.3" width="2" height="1.0" fill="#c8ffc8" stroke="#44e844" stroke-width="1"/><path d="M443.5 69.6 V75.4" stroke="#44e844" stroke-width="1"/><rect x="442.5" y="71.7" width="2" height="2.6" fill="#c8ffc8" stroke="#44e844" stroke-width="1"/><path d="M447.5 74.1 V78.4" stroke="#44e844" stroke-width="1"/><rect x="446.5" y="74.3" width="2" height="3.6" fill="#c8ffc8" stroke="#44e844" stroke-width="1"/><path d="M451.5 77.3 V81.3" stroke="#44e844" stroke-width="1"/><rect x="450.5" y="77.9" width="2" height="1.8" fill="#c8ffc8" stroke="#44e844" stroke-width="1"/><path d="M455.5 78.6 V82.2" stroke="#44e844" stroke-width="1"/><rect x="454.5" y="79.7" width="2" height="1.0" fill="#c8ffc8" stroke="#44e844" stroke-width="1"/><path d="M459.5 79.6 V81.4" stroke="#44e844" stroke-width="1"/><rect x="458.5" y="80.3" width="2" height="1.0" fill="#c8ffc8" stroke="#44e844" stroke-width="1"/><path d="M463.5 78.6 V84.6" stroke="#44e844" stroke-width="1"/><rect x="462.5" y="80.6" width="2" height="3.6" fill="#c8ffc8" stroke="#44e844" stroke-width="1"/><path d="M467.5 82.0 V87.0" stroke="#44e844" stroke-width="1"/><rect x="466.5" y="84.2" width="2" height="1.6" fill="#c8ffc8" stroke="#44e844" stroke-width="1"/><path d="M471.5 84.2 V87.0" stroke="#44e844" stroke-width="1"/><rect x="470.5" y="84.7" width="2" height="1.2" fill="#000" stroke="#44e844" stroke-width="1"/><path d="M475.5 79.4 V84.7" stroke="#44e844" stroke-width="1"/><rect x="474.5" y="80.7" width="2" height="4.0" fill="#000" stroke="#44e844" stroke-width="1"/><path d="M479.5 77.7 V81.6" stroke="#44e844" stroke-width="1"/><rect x="478.5" y="78.9" width="2" height="1.8" fill="#000" stroke="#44e844" stroke-width="1"/><path d="M483.5 75.7 V80.0" stroke="#44e844" stroke-width="1"/><rect x="482.5" y="77.0" width="2" height="1.9" fill="#000" stroke="#44e844" stroke-width="1"/><path d="M487.5 75.1 V78.1" stroke="#44e844" stroke-width="1"/><rect x="486.5" y="75.2" width="2" height="1.7" fill="#000" stroke="#44e844" stroke-width="1"/><path d="M491.5 71.1 V77.3" stroke="#44e844" stroke-width="1"/><rect x="490.5" y="73.2" width="2" height="2.0" fill="#000" stroke="#44e844" stroke-width="1"/><path d="M495.5 71.8 V73.5" stroke="#44e844" stroke-width="1"/><rect x="494.5" y="72.8" width="2" height="1.0" fill="#000" stroke="#44e844" stroke-width="1"/><path d="M499.5 69.8 V74.8" stroke="#44e844" stroke-width="1"/><rect x="498.5" y="71.6" width="2" height="1.2" fill="#000" stroke="#44e844" stroke-width="1"/><path d="M503.5 70.9 V76.0" stroke="#44e844" stroke-width="1"/><rect x="502.5" y="71.6" width="2" height="4.0" fill="#c8ffc8" stroke="#44e844" stroke-width="1"/><path d="M507.5 73.6 V78.3" stroke="#44e844" stroke-width="1"/><rect x="506.5" y="75.6" width="2" height="2.4" fill="#c8ffc8" stroke="#44e844" stroke-width="1"/><path d="M511.5 77.7 V78.4" stroke="#44e844" stroke-width="1"/><rect x="510.5" y="77.7" width="2" height="1.0" fill="#000" stroke="#44e844" stroke-width="1"/><path d="M515.5 73.1 V78.4" stroke="#44e844" stroke-width="1"/><rect x="514.5" y="74.7" width="2" height="3.1" fill="#000" stroke="#44e844" stroke-width="1"/><path d="M519.5 73.2 V74.9" stroke="#44e844" stroke-width="1"/><rect x="518.5" y="74.6" width="2" height="1.0" fill="#000" stroke="#44e844" stroke-width="1"/><path d="M523.5 74.3 V77.0" stroke="#44e844" stroke-width="1"/><rect x="522.5" y="74.6" width="2" height="1.3" fill="#c8ffc8" stroke="#44e844" stroke-width="1"/><path d="M527.5 75.4 V78.5" stroke="#44e844" stroke-width="1"/><rect x="526.5" y="75.9" width="2" height="1.4" fill="#c8ffc8" stroke="#44e844" stroke-width="1"/><path d="M531.5 76.5 V81.0" stroke="#44e844" stroke-width="1"/><rect x="530.5" y="77.3" width="2" height="2.8" fill="#c8ffc8" stroke="#44e844" stroke-width="1"/><path d="M535.5 79.7 V81.0" stroke="#44e844" stroke-width="1"/><rect x="534.5" y="80.1" width="2" height="1.0" fill="#c8ffc8" stroke="#44e844" stroke-width="1"/><path d="M539.5 78.6 V81.7" stroke="#44e844" stroke-width="1"/><rect x="538.5" y="80.0" width="2" height="1.0" fill="#000" stroke="#44e844" stroke-width="1"/><path d="M543.5 78.7 V82.1" stroke="#44e844" stroke-width="1"/><rect x="542.5" y="80.0" width="2" height="1.0" fill="#c8ffc8" stroke="#44e844" stroke-width="1"/><path d="M547.5 77.8 V82.0" stroke="#44e844" stroke-width="1"/><rect x="546.5" y="79.4" width="2" height="1.0" fill="#000" stroke="#44e844" stroke-width="1"/><path d="M551.5 78.7 V85.9" stroke="#44e844" stroke-width="1"/><rect x="550.5" y="79.4" width="2" height="5.9" fill="#c8ffc8" stroke="#44e844" stroke-width="1"/><path d="M555.5 84.8 V91.4" stroke="#44e844" stroke-width="1"/><rect x="554.5" y="85.2" width="2" height="4.0" fill="#c8ffc8" stroke="#44e844" stroke-width="1"/><path d="M559.5 88.9 V91.3" stroke="#44e844" stroke-width="1"/><rect x="558.5" y="89.2" width="2" height="1.6" fill="#c8ffc8" stroke="#44e844" stroke-width="1"/><path d="M563.5 90.2 V93.9" stroke="#44e844" stroke-width="1"/><rect x="562.5" y="90.8" width="2" height="2.9" fill="#c8ffc8" stroke="#44e844" stroke-width="1"/><path d="M567.5 92.5 V95.4" stroke="#44e844" stroke-width="1"/><rect x="566.5" y="93.4" width="2" height="1.0" fill="#000" stroke="#44e844" stroke-width="1"/><path d="M571.5 91.0 V94.9" stroke="#44e844" stroke-width="1"/><rect x="570.5" y="91.9" width="2" height="1.5" fill="#000" stroke="#44e844" stroke-width="1"/><path d="M575.5 91.2 V93.4" stroke="#44e844" stroke-width="1"/><rect x="574.5" y="91.6" width="2" height="1.0" fill="#000" stroke="#44e844" stroke-width="1"/><path d="M579.5 89.5 V93.1" stroke="#44e844" stroke-width="1"/><rect x="578.5" y="91.6" width="2" height="1.3" fill="#c8ffc8" stroke="#44e844" stroke-width="1"/><path d="M583.5 90.7 V94.0" stroke="#44e844" stroke-width="1"/><rect x="582.5" y="92.3" width="2" height="1.0" fill="#000" stroke="#44e844" stroke-width="1"/><path d="M587.5 91.9 V92.9" stroke="#44e844" stroke-width="1"/><rect x="586.5" y="92.3" width="2" height="1.0" fill="#c8ffc8" stroke="#44e844" stroke-width="1"/></svg>
<div class="t" style="left:7px;top:6px;font-size:10px;letter-spacing:-0.35px;color:#fff;">XAUUSD,M1&nbsp; 1880.66 1880.66 1879.46 1879.46</div>
<div class="t" style="left:3px;top:150px;font-size:10px;letter-spacing:-0.35px;color:#fff;">24 May 2021</div>
<div class="t" style="left:67px;top:150px;font-size:10px;letter-spacing:-0.35px;color:#fff;">24 May 12:25</div>
<div class="t" style="left:131px;top:150px;font-size:10px;letter-spacing:-0.35px;color:#fff;">24 May 12:41</div>
<div class="t" style="left:195px;top:150px;font-size:10px;letter-spacing:-0.35px;color:#fff;">24 May 12:57</div>
<div class="t" style="left:259px;top:150px;font-size:10px;letter-spacing:-0.35px;color:#fff;">24 May 13:13</div>
<div class="t" style="left:323px;top:150px;font-size:10px;letter-spacing:-0.35px;color:#fff;">24 May 13:29</div>
<div class="t" style="left:387px;top:150px;font-size:10px;letter-spacing:-0.35px;color:#fff;">24 May 13:45</div>
<div class="t" style="left:451px;top:150px;font-size:10px;letter-spacing:-0.35px;color:#fff;">24 May 14:01</div>
<div class="t" style="left:515px;top:150px;font-size:10px;letter-spacing:-0.35px;color:#fff;">24 May 14:17</div>
<div class="t" style="left:579px;top:150px;font-size:10px;letter-spacing:-0.35px;color:#fff;">24 May 14:33</div>
<div class="t" style="left:265px;top:52px;font-size:21px;color:#f5f51e;">buy价差&nbsp; 232.600<span style="padding:0 1.500px">=</span>6834.800<span style="display:inline-block;transform:scaleX(1.700);padding:0 2.500px">-</span>6602.200</div>
</div>
<div class="a" style="left:774px;top:240px;width:16px;height:440px;background:#c6d8ec;"></div>
<div class="a" style="left:774px;top:240px;width:16px;height:12px;background:#f0f0f0;"></div>
<svg style="left:778px;top:243px" width="7" height="7" viewBox="0 0 7 7"><path d="M0.800 0.800 L6.200 6.200 M6.200 0.800 L0.800 6.200" stroke="#111" stroke-width="1.600"/></svg>
<div class="a" style="left:774px;top:638px;width:16px;height:42px;background:#9db7dc;"></div>
<div class="t" style="left:775px;top:679px;font-size:12.300px;color:#16233a;transform-origin:0 0;transform:rotate(-90deg);">工具箱</div>
<div class="a" style="left:790px;top:240px;width:576px;height:415px;background:#fff;border-top:1px solid #c9c9c9;border-left:1px solid #9fadbf;box-sizing:border-box;overflow:hidden;"></div>
<div class="a" style="left:791px;top:241px;width:575px;height:23px;background:linear-gradient(#ffffff,#f2f2f2);border-bottom:1px solid #d5d5d5;box-sizing:border-box;"></div>
<div class="a" style="left:908px;top:241px;width:1px;height:414px;background:#dedede;"></div>
<div class="a" style="left:968px;top:241px;width:1px;height:414px;background:#dedede;"></div>
<div class="a" style="left:1027px;top:241px;width:1px;height:414px;background:#dedede;"></div>
<div class="a" style="left:1095px;top:241px;width:1px;height:414px;background:#dedede;"></div>
<div class="a" style="left:1146px;top:241px;width:1px;height:414px;background:#dedede;"></div>
<div class="a" style="left:1214px;top:241px;width:1px;height:414px;background:#dedede;"></div>
<div class="a" style="left:1298px;top:241px;width:1px;height:414px;background:#dedede;"></div>
<div class="t" style="left:796px;top:246px;font-size:12.300px;color:#111;">时间</div>
<div class="t" style="right:404px;top:246px;font-size:12.300px;color:#111;">处理</div>
<div class="t" style="right:345px;top:246px;font-size:12.300px;color:#111;">订单</div>
<div class="t" style="right:276px;top:246px;font-size:12.300px;color:#111;">交易品种</div>
<div class="t" style="right:226px;top:246px;font-size:12.300px;color:#111;">类型</div>
<div class="t" style="right:158px;top:246px;font-size:12.300px;color:#111;">趋向</div>
<div class="t" style="right:73px;top:246px;font-size:12.300px;color:#111;">交易量</div>
<div class="t" style="left:1354px;top:246px;font-size:12.300px;color:#111;">价格</div>
<div class="a" style="left:791px;top:264px;width:575px;height:390px;overflow:hidden;">
<div class="row g" style="left:0;top:1px;"><div class="cd" style="left:117px;"></div><div class="cd" style="left:177px;"></div><div class="cd" style="left:236px;"></div><div class="cd" style="left:304px;"></div><div class="cd" style="left:355px;"></div><div class="cd" style="left:423px;"></div><div class="cd" style="left:507px;"></div><svg style="left:1px;top:2.500px" width="13" height="16" viewBox="0 0 12 16" preserveAspectRatio="none"><path d="M1.500 0.800 H10.500 V11.500 L7 15.200 H1.500 Z" fill="#eaf4ff" stroke="#3a8ad0" stroke-width="1.100" stroke-linejoin="round"/><path d="M7 15 V11.500 H10.500" fill="none" stroke="#3a8ad0" stroke-width="1"/><path d="M9 5 H3.500 M5.500 2.800 L3.300 5 L5.500 7.200" stroke="#2a55b5" stroke-width="1.300" fill="none"/></svg><div class="t" style="left:20px;color:#111;">2021.05.24 23:...</div><div class="t" style="right:403.5px;color:#111;">10726</div><div class="t" style="right:344.5px;color:#111;">10726</div><div class="t" style="left:238px;color:#111;">美国原油 ...</div><div class="t" style="right:225px;color:#111;">buy</div><div class="t" style="right:157px;color:#111;">out</div><div class="t" style="right:71.5px;color:#111;">1</div><div class="t" style="left:551px;color:#111;">6601.800</div></div>
<div class="row" style="left:0;top:22px;"><div class="cd" style="left:117px;"></div><div class="cd" style="left:177px;"></div><div class="cd" style="left:236px;"></div><div class="cd" style="left:304px;"></div><div class="cd" style="left:355px;"></div><div class="cd" style="left:423px;"></div><div class="cd" style="left:507px;"></div><svg style="left:1px;top:2.500px" width="13" height="16" viewBox="0 0 12 16" preserveAspectRatio="none"><path d="M1.500 0.800 H10.500 V11.500 L7 15.200 H1.500 Z" fill="#fff0ec" stroke="#e0533a" stroke-width="1.100" stroke-linejoin="round"/><path d="M7 15 V11.500 H10.500" fill="none" stroke="#e0533a" stroke-width="1"/><path d="M9 5 H3.500 M5.500 2.800 L3.300 5 L5.500 7.200" stroke="#d0342c" stroke-width="1.300" fill="none"/></svg><div class="t" style="left:20px;color:#111;">2021.05.24 23:...</div><div class="t" style="right:403.5px;color:#111;">10727</div><div class="t" style="right:344.5px;color:#111;">10727</div><div class="t" style="left:238px;color:#111;">英国原油 ...</div><div class="t" style="right:225px;color:#111;">sell</div><div class="t" style="right:157px;color:#111;">out</div><div class="t" style="right:71.5px;color:#111;">1</div><div class="t" style="left:551px;color:#111;">6832.400</div></div>
<div class="row g" style="left:0;top:43px;"><div class="cd" style="left:117px;"></div><div class="cd" style="left:177px;"></div><div class="cd" style="left:236px;"></div><div class="cd" style="left:304px;"></div><div class="cd" style="left:355px;"></div><div class="cd" style="left:423px;"></div><div class="cd" style="left:507px;"></div><svg style="left:1px;top:2.500px" width="13" height="16" viewBox="0 0 12 16" preserveAspectRatio="none"><path d="M1.500 0.800 H10.500 V11.500 L7 15.200 H1.500 Z" fill="#eaf4ff" stroke="#3a8ad0" stroke-width="1.100" stroke-linejoin="round"/><path d="M7 15 V11.500 H10.500" fill="none" stroke="#3a8ad0" stroke-width="1"/><path d="M9 5 H3.500 M5.500 2.800 L3.300 5 L5.500 7.200" stroke="#2a55b5" stroke-width="1.300" fill="none"/></svg><div class="t" style="left:20px;color:#111;">2021.05.24 23:...</div><div class="t" style="right:403.5px;color:#111;">10728</div><div class="t" style="right:344.5px;color:#111;">10728</div><div class="t" style="left:238px;color:#111;">美国原油 ...</div><div class="t" style="right:225px;color:#111;">buy</div><div class="t" style="right:157px;color:#111;">out</div><div class="t" style="right:71.5px;color:#111;">1</div><div class="t" style="left:551px;color:#111;">6601.800</div></div>
<div class="row" style="left:0;top:64px;"><div class="cd" style="left:117px;"></div><div class="cd" style="left:177px;"></div><div class="cd" style="left:236px;"></div><div class="cd" style="left:304px;"></div><div class="cd" style="left:355px;"></div><div class="cd" style="left:423px;"></div><div class="cd" style="left:507px;"></div><svg style="left:1px;top:2.500px" width="13" height="16" viewBox="0 0 12 16" preserveAspectRatio="none"><path d="M1.500 0.800 H10.500 V11.500 L7 15.200 H1.500 Z" fill="#fff0ec" stroke="#e0533a" stroke-width="1.100" stroke-linejoin="round"/><path d="M7 15 V11.500 H10.500" fill="none" stroke="#e0533a" stroke-width="1"/><path d="M9 5 H3.500 M5.500 2.800 L3.300 5 L5.500 7.200" stroke="#d0342c" stroke-width="1.300" fill="none"/></svg><div class="t" style="left:20px;color:#111;">2021.05.24 23:...</div><div class="t" style="right:403.5px;color:#111;">10729</div><div class="t" style="right:344.5px;color:#111;">10729</div><div class="t" style="left:238px;color:#111;">英国原油 ...</div><div class="t" style="right:225px;color:#111;">sell</div><div class="t" style="right:157px;color:#111;">out</div><div class="t" style="right:71.5px;color:#111;">1</div><div class="t" style="left:551px;color:#111;">6832.400</div></div>
<div class="row g" style="left:0;top:85px;"><div class="cd" style="left:117px;"></div><div class="cd" style="left:177px;"></div><div class="cd" style="left:236px;"></div><div class="cd" style="left:304px;"></div><div class="cd" style="left:355px;"></div><div class="cd" style="left:423px;"></div><div class="cd" style="left:507px;"></div><svg style="left:1px;top:2.500px" width="13" height="16" viewBox="0 0 12 16" preserveAspectRatio="none"><path d="M1.500 0.800 H10.500 V11.500 L7 15.200 H1.500 Z" fill="#eaf4ff" stroke="#3a8ad0" stroke-width="1.100" stroke-linejoin="round"/><path d="M7 15 V11.500 H10.500" fill="none" stroke="#3a8ad0" stroke-width="1"/><path d="M9 5 H3.500 M5.500 2.800 L3.300 5 L5.500 7.200" stroke="#2a55b5" stroke-width="1.300" fill="none"/></svg><div class="t" style="left:20px;color:#111;">2021.05.24 23:...</div><div class="t" style="right:403.5px;color:#111;">10730</div><div class="t" style="right:344.5px;color:#111;">10730</div><div class="t" style="left:238px;color:#111;">美国原油 ...</div><div class="t" style="right:225px;color:#111;">buy</div><div class="t" style="right:157px;color:#111;">out</div><div class="t" style="right:71.5px;color:#111;">1</div><div class="t" style="left:551px;color:#111;">6601.800</div></div>
<div class="row" style="left:0;top:106px;"><div class="cd" style="left:117px;"></div><div class="cd" style="left:177px;"></div><div class="cd" style="left:236px;"></div><div class="cd" style="left:304px;"></div><div class="cd" style="left:355px;"></div><div class="cd" style="left:423px;"></div><div class="cd" style="left:507px;"></div><svg style="left:1px;top:2.500px" width="13" height="16" viewBox="0 0 12 16" preserveAspectRatio="none"><path d="M1.500 0.800 H10.500 V11.500 L7 15.200 H1.500 Z" fill="#fff0ec" stroke="#e0533a" stroke-width="1.100" stroke-linejoin="round"/><path d="M7 15 V11.500 H10.500" fill="none" stroke="#e0533a" stroke-width="1"/><path d="M9 5 H3.500 M5.500 2.800 L3.300 5 L5.500 7.200" stroke="#d0342c" stroke-width="1.300" fill="none"/></svg><div class="t" style="left:20px;color:#111;">2021.05.24 23:...</div><div class="t" style="right:403.5px;color:#111;">10731</div><div class="t" style="right:344.5px;color:#111;">10731</div><div class="t" style="left:238px;color:#111;">英国原油 ...</div><div class="t" style="right:225px;color:#111;">sell</div><div class="t" style="right:157px;color:#111;">out</div><div class="t" style="right:71.5px;color:#111;">1</div><div class="t" style="left:551px;color:#111;">6832.400</div></div>
<div class="row g" style="left:0;top:127px;"><div class="cd" style="left:117px;"></div><div class="cd" style="left:177px;"></div><div class="cd" style="left:236px;"></div><div class="cd" style="left:304px;"></div><div class="cd" style="left:355px;"></div><div class="cd" style="left:423px;"></div><div class="cd" style="left:507px;"></div><svg style="left:1px;top:2.500px" width="13" height="16" viewBox="0 0 12 16" preserveAspectRatio="none"><path d="M1.500 0.800 H10.500 V11.500 L7 15.200 H1.500 Z" fill="#eaf4ff" stroke="#3a8ad0" stroke-width="1.100" stroke-linejoin="round"/><path d="M7 15 V11.500 H10.500" fill="none" stroke="#3a8ad0" stroke-width="1"/><path d="M9 5 H3.500 M5.500 2.800 L3.300 5 L5.500 7.200" stroke="#2a55b5" stroke-width="1.300" fill="none"/></svg><div class="t" style="left:20px;color:#111;">2021.05.24 23:...</div><div class="t" style="right:403.5px;color:#111;">10732</div><div class="t" style="right:344.5px;color:#111;">10732</div><div class="t" style="left:238px;color:#111;">美国原油 ...</div><div class="t" style="right:225px;color:#111;">buy</div><div class="t" style="right:157px;color:#111;">out</div><div class="t" style="right:71.5px;color:#111;">1</div><div class="t" style="left:551px;color:#111;">6601.800</div></div>
<div class="row sel" style="left:0;top:148px;"><div class="cd" style="left:117px;background:#7fbfff;"></div><div class="cd" style="left:177px;background:#7fbfff;"></div><div class="cd" style="left:236px;background:#7fbfff;"></div><div class="cd" style="left:304px;background:#7fbfff;"></div><div class="cd" style="left:355px;background:#7fbfff;"></div><div class="cd" style="left:423px;background:#7fbfff;"></div><div class="cd" style="left:507px;background:#7fbfff;"></div><svg style="left:1px;top:2.500px" width="13" height="16" viewBox="0 0 12 16" preserveAspectRatio="none"><path d="M1.500 0.800 H10.500 V11.500 L7 15.200 H1.500 Z" fill="#fff0ec" stroke="#e0533a" stroke-width="1.100" stroke-linejoin="round"/><path d="M7 15 V11.500 H10.500" fill="none" stroke="#e0533a" stroke-width="1"/><path d="M9 5 H3.500 M5.500 2.800 L3.300 5 L5.500 7.200" stroke="#d0342c" stroke-width="1.300" fill="none"/></svg><div class="t" style="left:20px;color:#fff;">2021.05.24 23:...</div><div class="t" style="right:403.5px;color:#fff;">10733</div><div class="t" style="right:344.5px;color:#fff;">10733</div><div class="t" style="left:238px;color:#fff;">英国原油 ...</div><div class="t" style="right:225px;color:#fff;">sell</div><div class="t" style="right:157px;color:#fff;">out</div><div class="t" style="right:71.5px;color:#fff;">1</div><div class="t" style="left:551px;color:#fff;">6832.400</div></div>
<div class="row g" style="left:0;top:169px;"><div class="cd" style="left:117px;"></div><div class="cd" style="left:177px;"></div><div class="cd" style="left:236px;"></div><div class="cd" style="left:304px;"></div><div class="cd" style="left:355px;"></div><div class="cd" style="left:423px;"></div><div class="cd" style="left:507px;"></div><svg style="left:1px;top:2.500px" width="13" height="16" viewBox="0 0 12 16" preserveAspectRatio="none"><path d="M1.500 0.800 H10.500 V11.500 L7 15.200 H1.500 Z" fill="#eaf4ff" stroke="#3a8ad0" stroke-width="1.100" stroke-linejoin="round"/><path d="M7 15 V11.500 H10.500" fill="none" stroke="#3a8ad0" stroke-width="1"/><path d="M9 5 H3.500 M5.500 2.800 L3.300 5 L5.500 7.200" stroke="#2a55b5" stroke-width="1.300" fill="none"/></svg><div class="t" style="left:20px;color:#111;">2021.05.24 23:...</div><div class="t" style="right:403.5px;color:#111;">10734</div><div class="t" style="right:344.5px;color:#111;">10734</div><div class="t" style="left:238px;color:#111;">美国原油 ...</div><div class="t" style="right:225px;color:#111;">buy</div><div class="t" style="right:157px;color:#111;">out</div><div class="t" style="right:71.5px;color:#111;">1</div><div class="t" style="left:551px;color:#111;">6601.800</div></div>
<div class="row" style="left:0;top:190px;"><div class="cd" style="left:117px;"></div><div class="cd" style="left:177px;"></div><div class="cd" style="left:236px;"></div><div class="cd" style="left:304px;"></div><div class="cd" style="left:355px;"></div><div class="cd" style="left:423px;"></div><div class="cd" style="left:507px;"></div><svg style="left:1px;top:2.500px" width="13" height="16" viewBox="0 0 12 16" preserveAspectRatio="none"><path d="M1.500 0.800 H10.500 V11.500 L7 15.200 H1.500 Z" fill="#fff0ec" stroke="#e0533a" stroke-width="1.100" stroke-linejoin="round"/><path d="M7 15 V11.500 H10.500" fill="none" stroke="#e0533a" stroke-width="1"/><path d="M9 5 H3.500 M5.500 2.800 L3.300 5 L5.500 7.200" stroke="#d0342c" stroke-width="1.300" fill="none"/></svg><div class="t" style="left:20px;color:#111;">2021.05.24 23:...</div><div class="t" style="right:403.5px;color:#111;">10735</div><div class="t" style="right:344.5px;color:#111;">10735</div><div class="t" style="left:238px;color:#111;">英国原油 ...</div><div class="t" style="right:225px;color:#111;">sell</div><div class="t" style="right:157px;color:#111;">out</div><div class="t" style="right:71.5px;color:#111;">1</div><div class="t" style="left:551px;color:#111;">6832.400</div></div>
<div class="row g" style="left:0;top:211px;"><div class="cd" style="left:117px;"></div><div class="cd" style="left:177px;"></div><div class="cd" style="left:236px;"></div><div class="cd" style="left:304px;"></div><div class="cd" style="left:355px;"></div><div class="cd" style="left:423px;"></div><div class="cd" style="left:507px;"></div><svg style="left:1px;top:2.500px" width="13" height="16" viewBox="0 0 12 16" preserveAspectRatio="none"><path d="M1.500 0.800 H10.500 V11.500 L7 15.200 H1.500 Z" fill="#eaf4ff" stroke="#3a8ad0" stroke-width="1.100" stroke-linejoin="round"/><path d="M7 15 V11.500 H10.500" fill="none" stroke="#3a8ad0" stroke-width="1"/><path d="M9 5 H3.500 M5.500 2.800 L3.300 5 L5.500 7.200" stroke="#2a55b5" stroke-width="1.300" fill="none"/></svg><div class="t" style="left:20px;color:#111;">2021.05.24 23:...</div><div class="t" style="right:403.5px;color:#111;">10736</div><div class="t" style="right:344.5px;color:#111;">10736</div><div class="t" style="left:238px;color:#111;">美国原油 ...</div><div class="t" style="right:225px;color:#111;">buy</div><div class="t" style="right:157px;color:#111;">out</div><div class="t" style="right:71.5px;color:#111;">1</div><div class="t" style="left:551px;color:#111;">6601.800</div></div>
<div class="row" style="left:0;top:232px;"><div class="cd" style="left:117px;"></div><div class="cd" style="left:177px;"></div><div class="cd" style="left:236px;"></div><div class="cd" style="left:304px;"></div><div class="cd" style="left:355px;"></div><div class="cd" style="left:423px;"></div><div class="cd" style="left:507px;"></div><svg style="left:1px;top:2.500px" width="13" height="16" viewBox="0 0 12 16" preserveAspectRatio="none"><path d="M1.500 0.800 H10.500 V11.500 L7 15.200 H1.500 Z" fill="#fff0ec" stroke="#e0533a" stroke-width="1.100" stroke-linejoin="round"/><path d="M7 15 V11.500 H10.500" fill="none" stroke="#e0533a" stroke-width="1"/><path d="M9 5 H3.500 M5.500 2.800 L3.300 5 L5.500 7.200" stroke="#d0342c" stroke-width="1.300" fill="none"/></svg><div class="t" style="left:20px;color:#111;">2021.05.24 23:...</div><div class="t" style="right:403.5px;color:#111;">10737</div><div class="t" style="right:344.5px;color:#111;">10737</div><div class="t" style="left:238px;color:#111;">英国原油 ...</div><div class="t" style="right:225px;color:#111;">sell</div><div class="t" style="right:157px;color:#111;">out</div><div class="t" style="right:71.5px;color:#111;">1</div><div class="t" style="left:551px;color:#111;">6832.400</div></div>
<div class="row g" style="left:0;top:253px;"><div class="cd" style="left:117px;"></div><div class="cd" style="left:177px;"></div><div class="cd" style="left:236px;"></div><div class="cd" style="left:304px;"></div><div class="cd" style="left:355px;"></div><div class="cd" style="left:423px;"></div><div class="cd" style="left:507px;"></div><svg style="left:1px;top:2.500px" width="13" height="16" viewBox="0 0 12 16" preserveAspectRatio="none"><path d="M1.500 0.800 H10.500 V11.500 L7 15.200 H1.500 Z" fill="#eaf4ff" stroke="#3a8ad0" stroke-width="1.100" stroke-linejoin="round"/><path d="M7 15 V11.500 H10.500" fill="none" stroke="#3a8ad0" stroke-width="1"/><path d="M9 5 H3.500 M5.500 2.800 L3.300 5 L5.500 7.200" stroke="#2a55b5" stroke-width="1.300" fill="none"/></svg><div class="t" style="left:20px;color:#111;">2021.05.24 23:...</div><div class="t" style="right:403.5px;color:#111;">10738</div><div class="t" style="right:344.5px;color:#111;">10738</div><div class="t" style="left:238px;color:#111;">美国原油 ...</div><div class="t" style="right:225px;color:#111;">buy</div><div class="t" style="right:157px;color:#111;">out</div><div class="t" style="right:71.5px;color:#111;">1</div><div class="t" style="left:551px;color:#111;">6601.800</div></div>
<div class="row" style="left:0;top:274px;"><div class="cd" style="left:117px;"></div><div class="cd" style="left:177px;"></div><div class="cd" style="left:236px;"></div><div class="cd" style="left:304px;"></div><div class="cd" style="left:355px;"></div><div class="cd" style="left:423px;"></div><div class="cd" style="left:507px;"></div><svg style="left:1px;top:2.500px" width="13" height="16" viewBox="0 0 12 16" preserveAspectRatio="none"><path d="M1.500 0.800 H10.500 V11.500 L7 15.200 H1.500 Z" fill="#fff0ec" stroke="#e0533a" stroke-width="1.100" stroke-linejoin="round"/><path d="M7 15 V11.500 H10.500" fill="none" stroke="#e0533a" stroke-width="1"/><path d="M9 5 H3.500 M5.500 2.800 L3.300 5 L5.500 7.200" stroke="#d0342c" stroke-width="1.300" fill="none"/></svg><div class="t" style="left:20px;color:#111;">2021.05.24 23:...</div><div class="t" style="right:403.5px;color:#111;">10739</div><div class="t" style="right:344.5px;color:#111;">10739</div><div class="t" style="left:238px;color:#111;">英国原油 ...</div><div class="t" style="right:225px;color:#111;">sell</div><div class="t" style="right:157px;color:#111;">out</div><div class="t" style="right:71.5px;color:#111;">1</div><div class="t" style="left:551px;color:#111;">6832.400</div></div>
<div class="row g" style="left:0;top:295px;"><div class="cd" style="left:117px;"></div><div class="cd" style="left:177px;"></div><div class="cd" style="left:236px;"></div><div class="cd" style="left:304px;"></div><div class="cd" style="left:355px;"></div><div class="cd" style="left:423px;"></div><div class="cd" style="left:507px;"></div><svg style="left:1px;top:2.500px" width="13" height="16" viewBox="0 0 12 16" preserveAspectRatio="none"><path d="M1.500 0.800 H10.500 V11.500 L7 15.200 H1.500 Z" fill="#eaf4ff" stroke="#3a8ad0" stroke-width="1.100" stroke-linejoin="round"/><path d="M7 15 V11.500 H10.500" fill="none" stroke="#3a8ad0" stroke-width="1"/><path d="M9 5 H3.500 M5.500 2.800 L3.300 5 L5.500 7.200" stroke="#2a55b5" stroke-width="1.300" fill="none"/></svg><div class="t" style="left:20px;color:#111;">2021.05.24 23:...</div><div class="t" style="right:403.5px;color:#111;">10740</div><div class="t" style="right:344.5px;color:#111;">10740</div><div class="t" style="left:238px;color:#111;">美国原油 ...</div><div class="t" style="right:225px;color:#111;">buy</div><div class="t" style="right:157px;color:#111;">out</div><div class="t" style="right:71.5px;color:#111;">1</div><div class="t" style="left:551px;color:#111;">6601.800</div></div>
<div class="row" style="left:0;top:316px;"><div class="cd" style="left:117px;"></div><div class="cd" style="left:177px;"></div><div class="cd" style="left:236px;"></div><div class="cd" style="left:304px;"></div><div class="cd" style="left:355px;"></div><div class="cd" style="left:423px;"></div><div class="cd" style="left:507px;"></div><svg style="left:1px;top:2.500px" width="13" height="16" viewBox="0 0 12 16" preserveAspectRatio="none"><path d="M1.500 0.800 H10.500 V11.500 L7 15.200 H1.500 Z" fill="#fff0ec" stroke="#e0533a" stroke-width="1.100" stroke-linejoin="round"/><path d="M7 15 V11.500 H10.500" fill="none" stroke="#e0533a" stroke-width="1"/><path d="M9 5 H3.500 M5.500 2.800 L3.300 5 L5.500 7.200" stroke="#d0342c" stroke-width="1.300" fill="none"/></svg><div class="t" style="left:20px;color:#111;">2021.05.24 23:...</div><div class="t" style="right:403.5px;color:#111;">10741</div><div class="t" style="right:344.5px;color:#111;">10741</div><div class="t" style="left:238px;color:#111;">英国原油 ...</div><div class="t" style="right:225px;color:#111;">sell</div><div class="t" style="right:157px;color:#111;">out</div><div class="t" style="right:71.5px;color:#111;">1</div><div class="t" style="left:551px;color:#111;">6832.400</div></div>
<div class="row g" style="left:0;top:337px;"><div class="cd" style="left:117px;"></div><div class="cd" style="left:177px;"></div><div class="cd" style="left:236px;"></div><div class="cd" style="left:304px;"></div><div class="cd" style="left:355px;"></div><div class="cd" style="left:423px;"></div><div class="cd" style="left:507px;"></div><svg style="left:1px;top:2.500px" width="13" height="16" viewBox="0 0 12 16" preserveAspectRatio="none"><path d="M1.500 0.800 H10.500 V11.500 L7 15.200 H1.500 Z" fill="#eaf4ff" stroke="#3a8ad0" stroke-width="1.100" stroke-linejoin="round"/><path d="M7 15 V11.500 H10.500" fill="none" stroke="#3a8ad0" stroke-width="1"/><path d="M9 5 H3.500 M5.500 2.800 L3.300 5 L5.500 7.200" stroke="#2a55b5" stroke-width="1.300" fill="none"/></svg><div class="t" style="left:20px;color:#111;">2021.05.24 23:...</div><div class="t" style="right:403.5px;color:#111;">10742</div><div class="t" style="right:344.5px;color:#111;">10742</div><div class="t" style="left:238px;color:#111;">美国原油 ...</div><div class="t" style="right:225px;color:#111;">buy</div><div class="t" style="right:157px;color:#111;">out</div><div class="t" style="right:71.5px;color:#111;">1</div><div class="t" style="left:551px;color:#111;">6601.800</div></div>
<div class="row" style="left:0;top:358px;"><div class="cd" style="left:117px;"></div><div class="cd" style="left:177px;"></div><div class="cd" style="left:236px;"></div><div class="cd" style="left:304px;"></div><div class="cd" style="left:355px;"></div><div class="cd" style="left:423px;"></div><div class="cd" style="left:507px;"></div><svg style="left:1px;top:2.500px" width="13" height="16" viewBox="0 0 12 16" preserveAspectRatio="none"><path d="M1.500 0.800 H10.500 V11.500 L7 15.200 H1.500 Z" fill="#fff0ec" stroke="#e0533a" stroke-width="1.100" stroke-linejoin="round"/><path d="M7 15 V11.500 H10.500" fill="none" stroke="#e0533a" stroke-width="1"/><path d="M9 5 H3.500 M5.500 2.800 L3.300 5 L5.500 7.200" stroke="#d0342c" stroke-width="1.300" fill="none"/></svg><div class="t" style="left:20px;color:#111;">2021.05.24 23:...</div><div class="t" style="right:403.5px;color:#111;">10743</div><div class="t" style="right:344.5px;color:#111;">10743</div><div class="t" style="left:238px;color:#111;">英国原油 ...</div><div class="t" style="right:225px;color:#111;">sell</div><div class="t" style="right:157px;color:#111;">out</div><div class="t" style="right:71.5px;color:#111;">1</div><div class="t" style="left:551px;color:#111;">6832.400</div></div>
<div class="row g" style="left:0;top:379px;"><div class="cd" style="left:117px;"></div><div class="cd" style="left:177px;"></div><div class="cd" style="left:236px;"></div><div class="cd" style="left:304px;"></div><div class="cd" style="left:355px;"></div><div class="cd" style="left:423px;"></div><div class="cd" style="left:507px;"></div><svg style="left:1px;top:2.500px" width="13" height="16" viewBox="0 0 12 16" preserveAspectRatio="none"><path d="M1.500 0.800 H10.500 V11.500 L7 15.200 H1.500 Z" fill="#eaf4ff" stroke="#3a8ad0" stroke-width="1.100" stroke-linejoin="round"/><path d="M7 15 V11.500 H10.500" fill="none" stroke="#3a8ad0" stroke-width="1"/><path d="M9 5 H3.500 M5.500 2.800 L3.300 5 L5.500 7.200" stroke="#2a55b5" stroke-width="1.300" fill="none"/></svg><div class="t" style="left:20px;color:#111;">2021.05.24 23:...</div><div class="t" style="right:403.5px;color:#111;">10744</div><div class="t" style="right:344.5px;color:#111;">10744</div><div class="t" style="left:238px;color:#111;">美国原油 ...</div><div class="t" style="right:225px;color:#111;">buy</div><div class="t" style="right:157px;color:#111;">out</div><div class="t" style="right:71.5px;color:#111;">1</div><div class="t" style="left:551px;color:#111;">6601.800</div></div>
</div>
<div class="a" style="left:790px;top:654px;width:576px;height:1px;background:#222;"></div>
<div class="a" style="left:1336px;top:381px;width:30px;height:25px;background:#2a9af3;border-radius:4px 0 0 4px;"></div>
<svg style="left:1341px;top:384px" width="21" height="18" viewBox="0 0 21 18"><circle cx="10.500" cy="6" r="3.800" fill="#5f9fd8" stroke="#fff" stroke-width="2"/><circle cx="5.500" cy="12" r="3.800" fill="#5f9fd8" stroke="#fff" stroke-width="2"/><circle cx="15.500" cy="12" r="3.800" fill="#5f9fd8" stroke="#fff" stroke-width="2"/></svg>
<div class="a" style="left:836px;top:654px;width:44px;height:22px;background:#fff;border:1px solid #222;border-top:none;box-sizing:border-box;box-shadow:1px 1px 0 #666;"></div>
<div class="t gtab" style="left:801px;top:659px;font-size:12.300px;">交易</div>
<div class="t" style="left:845px;top:659px;font-size:12.300px;color:#111;">历史</div>
<div class="t gtab" style="left:890px;top:659px;font-size:12.300px;">操作</div>
<div class="a" style="left:924px;top:658px;width:1px;height:15px;background:#888;"></div>
<div class="t gtab" style="left:934px;top:659px;font-size:12.300px;">日志</div>
<div class="a" style="left:774px;top:680px;width:592px;height:1px;background:#c4c4c4;"></div>
<div class="a" style="left:774px;top:681px;width:592px;height:15px;background:#f0f0f0;"></div>
<div class="t" style="left:776px;top:687px;font-size:12.300px;color:#111;">查看帮忙,请按 F1</div>
<div class="a" style="left:1363px;top:624px;width:3px;height:47px;background:#ecc9f0;"></div>
<div class="a" style="left:1355px;top:624px;width:8px;height:47px;background:#1ebb55;border:1px solid #1d3d82;border-radius:2px 2px 0 0;box-sizing:border-box;"></div>
<div class="a" style="left:1356px;top:625px;width:6px;height:14px;background:#2d3348;"></div>
<div class="a" style="left:1265px;top:670px;width:101px;height:27px;background:linear-gradient(#1e211f 0,#848a85 5%,#6f7570 30%,#505652 62%,#3b403d 100%);box-sizing:border-box;"></div>
<div class="a" style="left:1328px;top:671px;width:38px;height:26px;background:linear-gradient(rgba(255,255,255,.12),rgba(255,255,255,.08));"></div>
<div class="a" style="left:1270px;top:675px;width:2px;height:2px;background:#2c302e;box-shadow:3px 0 #2c302e,6px 0 #2c302e,0 4px #2c302e,3px 4px #2c302e,6px 4px #2c302e,0 8px #2c302e,3px 8px #2c302e,6px 8px #2c302e,0 12px #2c302e,3px 12px #2c302e,6px 12px #2c302e;"></div>
<div class="t" style="left:1286px;top:678px;font-size:11px;color:#fff;font-family:'Liberation Mono',monospace;letter-spacing:-0.800px;">CH</div>
<svg style="left:1307px;top:681.500px" width="15" height="8" viewBox="0 0 15 8"><rect x="0.500" y="0.500" width="14" height="7" rx="1" fill="none" stroke="#e6e6e6" stroke-width="1"/><path d="M2 2.500 H13 M2 4.500 H13" stroke="#e6e6e6" stroke-width="1" stroke-dasharray="1 1"/><path d="M4 6 H11" stroke="#e6e6e6" stroke-width="1"/></svg>
<svg style="left:1328px;top:675px" width="16" height="16" viewBox="0 0 16 16"><defs><radialGradient id="qg" cx="40%" cy="30%" r="70%"><stop offset="0" stop-color="#4a5ae8"/><stop offset="1" stop-color="#08108a"/></radialGradient></defs><circle cx="8" cy="8.200" r="6.800" fill="url(#qg)" stroke="#8fa0e0" stroke-width="1"/><text x="8" y="12.300" font-size="11.500" font-weight="bold" font-family="Liberation Sans,sans-serif" fill="#fff" text-anchor="middle">?</text></svg>
<div class="a" style="left:1354px;top:678px;width:6px;height:2px;background:#f2f2f2;"></div>
<svg style="left:1353px;top:687px" width="8" height="4" viewBox="0 0 8 4"><path d="M0 0 H8 L4 4 Z" fill="#f2f2f2"/></svg>
<div class="a" style="left:0;top:696px;width:1366px;height:40px;background:linear-gradient(90deg,#2f6d90 0,#2c6c98 12%,#2a70ae 24%,#2c7cc4 40%,#2b7cc6 56%,#2470be 72%,#1f62b0 100%);"></div>
<div class="a" style="left:0;top:696px;width:766px;height:40px;background:linear-gradient(rgba(30,60,90,.9) 0,rgba(150,195,230,.75) 4%,rgba(110,165,215,.45) 14%,rgba(30,80,140,.28) 34%,rgba(30,80,140,.12) 60%,rgba(20,70,150,.0) 100%);"></div>
<div class="a" style="left:766px;top:696px;width:600px;height:40px;background:linear-gradient(rgba(30,60,90,.9) 0,rgba(160,200,235,.8) 4%,rgba(120,170,215,.55) 11%,rgba(22,50,92,.8) 24%,rgba(18,48,96,.72) 45%,rgba(20,70,150,.1) 78%,rgba(20,70,150,0) 100%);"></div>
<div class="a" style="left:766px;top:697px;width:80px;height:22px;background:linear-gradient(90deg,rgba(43,124,198,.9),rgba(43,124,198,0));"></div>
<div class="a" style="left:1040px;top:699px;width:326px;height:37px;background:linear-gradient(90deg,rgba(14,34,70,0),rgba(14,34,70,.5) 45%,rgba(14,34,70,.55));"></div>
<svg style="left:900px;top:697px;filter:blur(1.500px)" width="100" height="39" viewBox="0 0 100 39"><path d="M0 4 Q50 6 84 39" stroke="rgba(170,210,245,.7)" stroke-width="5" fill="none"/></svg>
<svg style="left:6px;top:696px" width="42" height="40" viewBox="0 0 42 40"><defs><radialGradient id="orb" cx="50%" cy="88%" r="75%"><stop offset="0" stop-color="#58c8ff"/><stop offset=".35" stop-color="#2a86d8"/><stop offset=".7" stop-color="#3a6f98"/><stop offset="1" stop-color="#5f8fae"/></radialGradient><linearGradient id="orbh" x1="0" y1="0" x2="0" y2="1"><stop offset="0" stop-color="rgba(255,255,255,.55)"/><stop offset="1" stop-color="rgba(255,255,255,.05)"/></linearGradient></defs><circle cx="21" cy="20.500" r="18.300" fill="url(#orb)" stroke="#7fa9c8" stroke-width="1.200"/><path d="M5 15 A17 17 0 0 1 37 15 Q21 21 5 15 Z" fill="url(#orbh)"/><path d="M10.500 12.500 Q15.500 9.500 20 12.500 L18.800 19.800 Q14.500 17.500 9.300 19.800 Z" fill="#f2562a"/><path d="M21.600 13 Q26.500 15.800 31.800 12.800 L30.600 20 Q25.800 23 20.400 20.300 Z" fill="#86c43a"/><path d="M9 21.500 Q14 19.200 18.500 21.500 L17.300 28.800 Q12.800 26.500 7.800 28.800 Z" fill="#3aa2ee"/><path d="M20.100 22 Q25.300 24.800 30.400 21.800 L29.200 29 Q24 32 18.900 29.300 Z" fill="#f9c62e"/></svg>
<svg style="left:66px;top:699px" width="36" height="36" viewBox="0 0 36 36"><circle cx="12" cy="10" r="8.500" fill="#7cc23a"/><circle cx="25" cy="10.500" r="7.500" fill="#3b9ae8"/><circle cx="11" cy="25" r="8" fill="#f6c12a"/><circle cx="24.500" cy="24.500" r="8" fill="#ea4a3a"/><circle cx="18" cy="17.500" r="3" fill="#2f668e"/></svg>
<div class="a" style="left:114px;top:699px;width:133px;height:34px;background:linear-gradient(#f4f6f9,#e6ebf1);border-radius:2px;"></div>
<svg style="left:119px;top:705px" width="22" height="22" viewBox="0 0 22 22"><path d="M4 14 A7 7 0 1 1 18 12 H7.500" fill="none" stroke="#2f9be8" stroke-width="3.200"/><path d="M4.500 12.500 A7 7 0 0 0 17 16" fill="none" stroke="#2f9be8" stroke-width="3.200"/><path d="M2 17 Q0 9 9 4 Q17 0 19 3" fill="none" stroke="#5ab4f0" stroke-width="1.400"/></svg>
<svg style="left:141px;top:714px" width="5" height="6" viewBox="0 0 5 6"><path d="M0 0 L5 3 L0 6 Z" fill="#9aa4b0"/></svg>
<div class="t" style="left:153px;top:709px;font-size:12px;color:#111;">美军击毙2名IS...</div>
<div class="a" style="left:247px;top:699px;width:55px;height:34px;background:#1e87f0;"></div>
<div class="t" style="left:251px;top:709px;font-size:12.300px;color:#fff;">搜索一下</div>
<div class="a" style="left:309px;top:697px;width:59px;height:38px;background:linear-gradient(#cfe2f1 0,#bdd7ec 48%,#a6c9e6 52%,#c3dbee 100%);border:1px solid #eef5fb;border-radius:3px;box-sizing:border-box;box-shadow:0 0 0 1px rgba(18,48,88,.7);"></div>
<div class="a" style="left:371px;top:697px;width:59px;height:38px;background:linear-gradient(#92c1e5 0,#62a2d6 46%,#4690cf 52%,#5da6dc 100%);border:1px solid #a9cfee;border-radius:3px;box-sizing:border-box;box-shadow:0 0 0 1px rgba(18,48,88,.7);"></div>
<div class="a" style="left:433px;top:697px;width:59px;height:38px;background:linear-gradient(#92c1e5 0,#62a2d6 46%,#4690cf 52%,#5da6dc 100%);border:1px solid #a9cfee;border-radius:3px;box-sizing:border-box;box-shadow:0 0 0 1px rgba(18,48,88,.7);"></div>
<div class="a" style="left:495px;top:697px;width:59px;height:38px;background:linear-gradient(#92c1e5 0,#62a2d6 46%,#4690cf 52%,#5da6dc 100%);border:1px solid #a9cfee;border-radius:3px;box-sizing:border-box;box-shadow:0 0 0 1px rgba(18,48,88,.7);"></div>
<svg style="left:319px;top:698px" width="38" height="36" viewBox="0 0 38 36"><path d="M3 32 Q2 18 12 17 Q25 18 24 32 Q13 36 3 32 Z" fill="#2356ae"/><path d="M5 31 Q6 22 11 20" stroke="#4a86d8" stroke-width="1.500" fill="none"/><path d="M10 17 L15 28 L19 17 Z" fill="#f4f4f4"/><ellipse cx="13.500" cy="13" rx="5" ry="5.500" fill="#f0c89c"/><path d="M3 7 L14 2 L25 6.500 L14 11.500 Z" fill="#4a4f57"/><path d="M6.500 9 V12 Q13 15.500 20.500 12 V9 L14 11.800 Z" fill="#33373d"/><path d="M4.500 8 V14" stroke="#222" stroke-width="1.200"/><circle cx="4.500" cy="14.500" r="1.300" fill="#222"/><circle cx="27" cy="17.500" r="6.300" fill="#d6e8f5" stroke="#18233c" stroke-width="1.800"/><path d="M22.500 22.500 L18 29" stroke="#18233c" stroke-width="3" stroke-linecap="round"/></svg>
<div class="a" style="left:384px;top:700px;width:32px;height:32px;border-radius:50%;background:conic-gradient(from -10deg,#d548ee 0,#ff3d2a 16%,#ff8c1e 29%,#ffe11e 43%,#7ee62a 54%,#27dd55 64%,#20b4e0 74%,#2492f2 83%,#8a55f2 93%,#d548ee 100%);"></div>
<div class="a" style="left:396px;top:712px;width:7px;height:7px;border-radius:50%;background:#fff;box-shadow:0 0 2px 1px rgba(255,255,255,.7);"></div>
<svg style="left:447px;top:699px" width="32" height="31" viewBox="0 0 32 31"><path d="M6 20 Q8 8 15 7 Q22 8 24 20 Z" fill="#4f9e38"/><circle cx="14.800" cy="5" r="3.600" fill="#5db33f"/><circle cx="13.800" cy="4" r="1.300" fill="#b5e89a"/><path d="M2 24 Q2 16 8 14.500 L12 27 Q6 30 2 24 Z" fill="#e9bf2a"/><circle cx="6" cy="24" r="3.500" fill="#f4d23a"/><path d="M29 23 Q29 15 22 14 L18 27 Q25 31 29 23 Z" fill="#2f78c4"/><circle cx="24.500" cy="24" r="3.300" fill="#5aa0e0"/><circle cx="23" cy="22.500" r="1.300" fill="#e8f3fc"/><circle cx="15.500" cy="17" r="5.300" fill="#fff" stroke="#f0e0c8" stroke-width="0.800"/><text x="15.500" y="20.800" font-size="10" font-weight="bold" font-family="Liberation Sans,sans-serif" fill="#ef7a1a" text-anchor="middle">5</text></svg>
<svg style="left:505px;top:701px" width="38" height="30" viewBox="0 0 38 30"><ellipse cx="12" cy="10" rx="10.500" ry="9" fill="#2dcb55"/><path d="M5 16 L3.500 21.500 L10 18.500 Z" fill="#2dcb55"/><circle cx="8.500" cy="8" r="1.400" fill="#14702a"/><circle cx="16.300" cy="8" r="1.400" fill="#14702a"/><ellipse cx="25.500" cy="18.500" rx="9.500" ry="8.300" fill="#f6f4f4"/><path d="M29.500 25 L32 29 L26 26.500 Z" fill="#f6f4f4"/><circle cx="22" cy="16.500" r="1.300" fill="#d8908a"/><circle cx="28.300" cy="16.500" r="1.300" fill="#d8908a"/></svg>
<svg style="left:1145px;top:714px" width="8" height="5" viewBox="0 0 8 5"><path d="M0 5 L4 0 L8 5 Z" fill="#f2f2f2"/></svg>
<svg style="left:1165px;top:708px" width="18" height="18" viewBox="0 0 18 18"><circle cx="8.500" cy="8.500" r="8" fill="#f2c81e"/><path d="M6 3 H11 V7 H15 V11 H11 V13 H6 V11 H2 V7 H6 Z" fill="#2fae3a"/><rect x="8" y="9" width="9" height="8" fill="#3aa0e8" stroke="#fff" stroke-width="1"/></svg>
<svg style="left:1191px;top:707px" width="17" height="20" viewBox="0 0 17 20"><rect x="1" y="3" width="9" height="15" rx="1" fill="none" stroke="#f4f4f4" stroke-width="1.600"/><rect x="5" y="5" width="9" height="8" fill="#f4f4f4"/><path d="M7 1.500 V5 M12 1.500 V5 M9.500 13 V17" stroke="#f4f4f4" stroke-width="1.600"/></svg>
<svg style="left:1215px;top:709px" width="17" height="14" viewBox="0 0 17 14"><path d="M1 13 V11 M4.500 13 V9 M8 13 V6.500" stroke="#f4f4f4" stroke-width="2"/><path d="M11.500 13 V4 M15 13 V1.500" stroke="#9db4cc" stroke-width="2"/></svg>
<div class="t" style="left:1251px;top:701.500px;font-size:12.300px;color:#e6f0fa;z-index:3;">7:21&nbsp;周21&nbsp;7:21</div>
<div class="t" style="left:1247px;top:718.600px;font-size:12.300px;color:#e6f0fa;z-index:3;">2021/8/21/8/21</div>
<div class="a" style="left:1329px;top:697px;width:37px;height:31px;background:linear-gradient(135deg,rgba(120,130,140,.92),rgba(90,100,112,.95));border-left:1px solid rgba(170,185,200,.7);box-sizing:border-box;"></div>
<svg style="left:1339px;top:705px" width="15" height="8" viewBox="0 0 15 8"><rect x="0.500" y="0.500" width="14" height="7" rx="1" fill="none" stroke="#e6e6e6" stroke-width="1"/><path d="M2 2.500 H13 M2 4.500 H13" stroke="#e6e6e6" stroke-width="1" stroke-dasharray="1 1"/><path d="M4 6 H11" stroke="#e6e6e6" stroke-width="1"/></svg>
<div class="a" style="left:1337px;top:727px;width:29px;height:9px;background:linear-gradient(#a6b2c2,#8a97aa);border-top:1px solid #c9d3e0;box-sizing:border-box;"></div>
<div class="t" style="left:1338px;top:729px;font-size:13px;color:#eef4fa;">21</div>
</div>
</body></html>
